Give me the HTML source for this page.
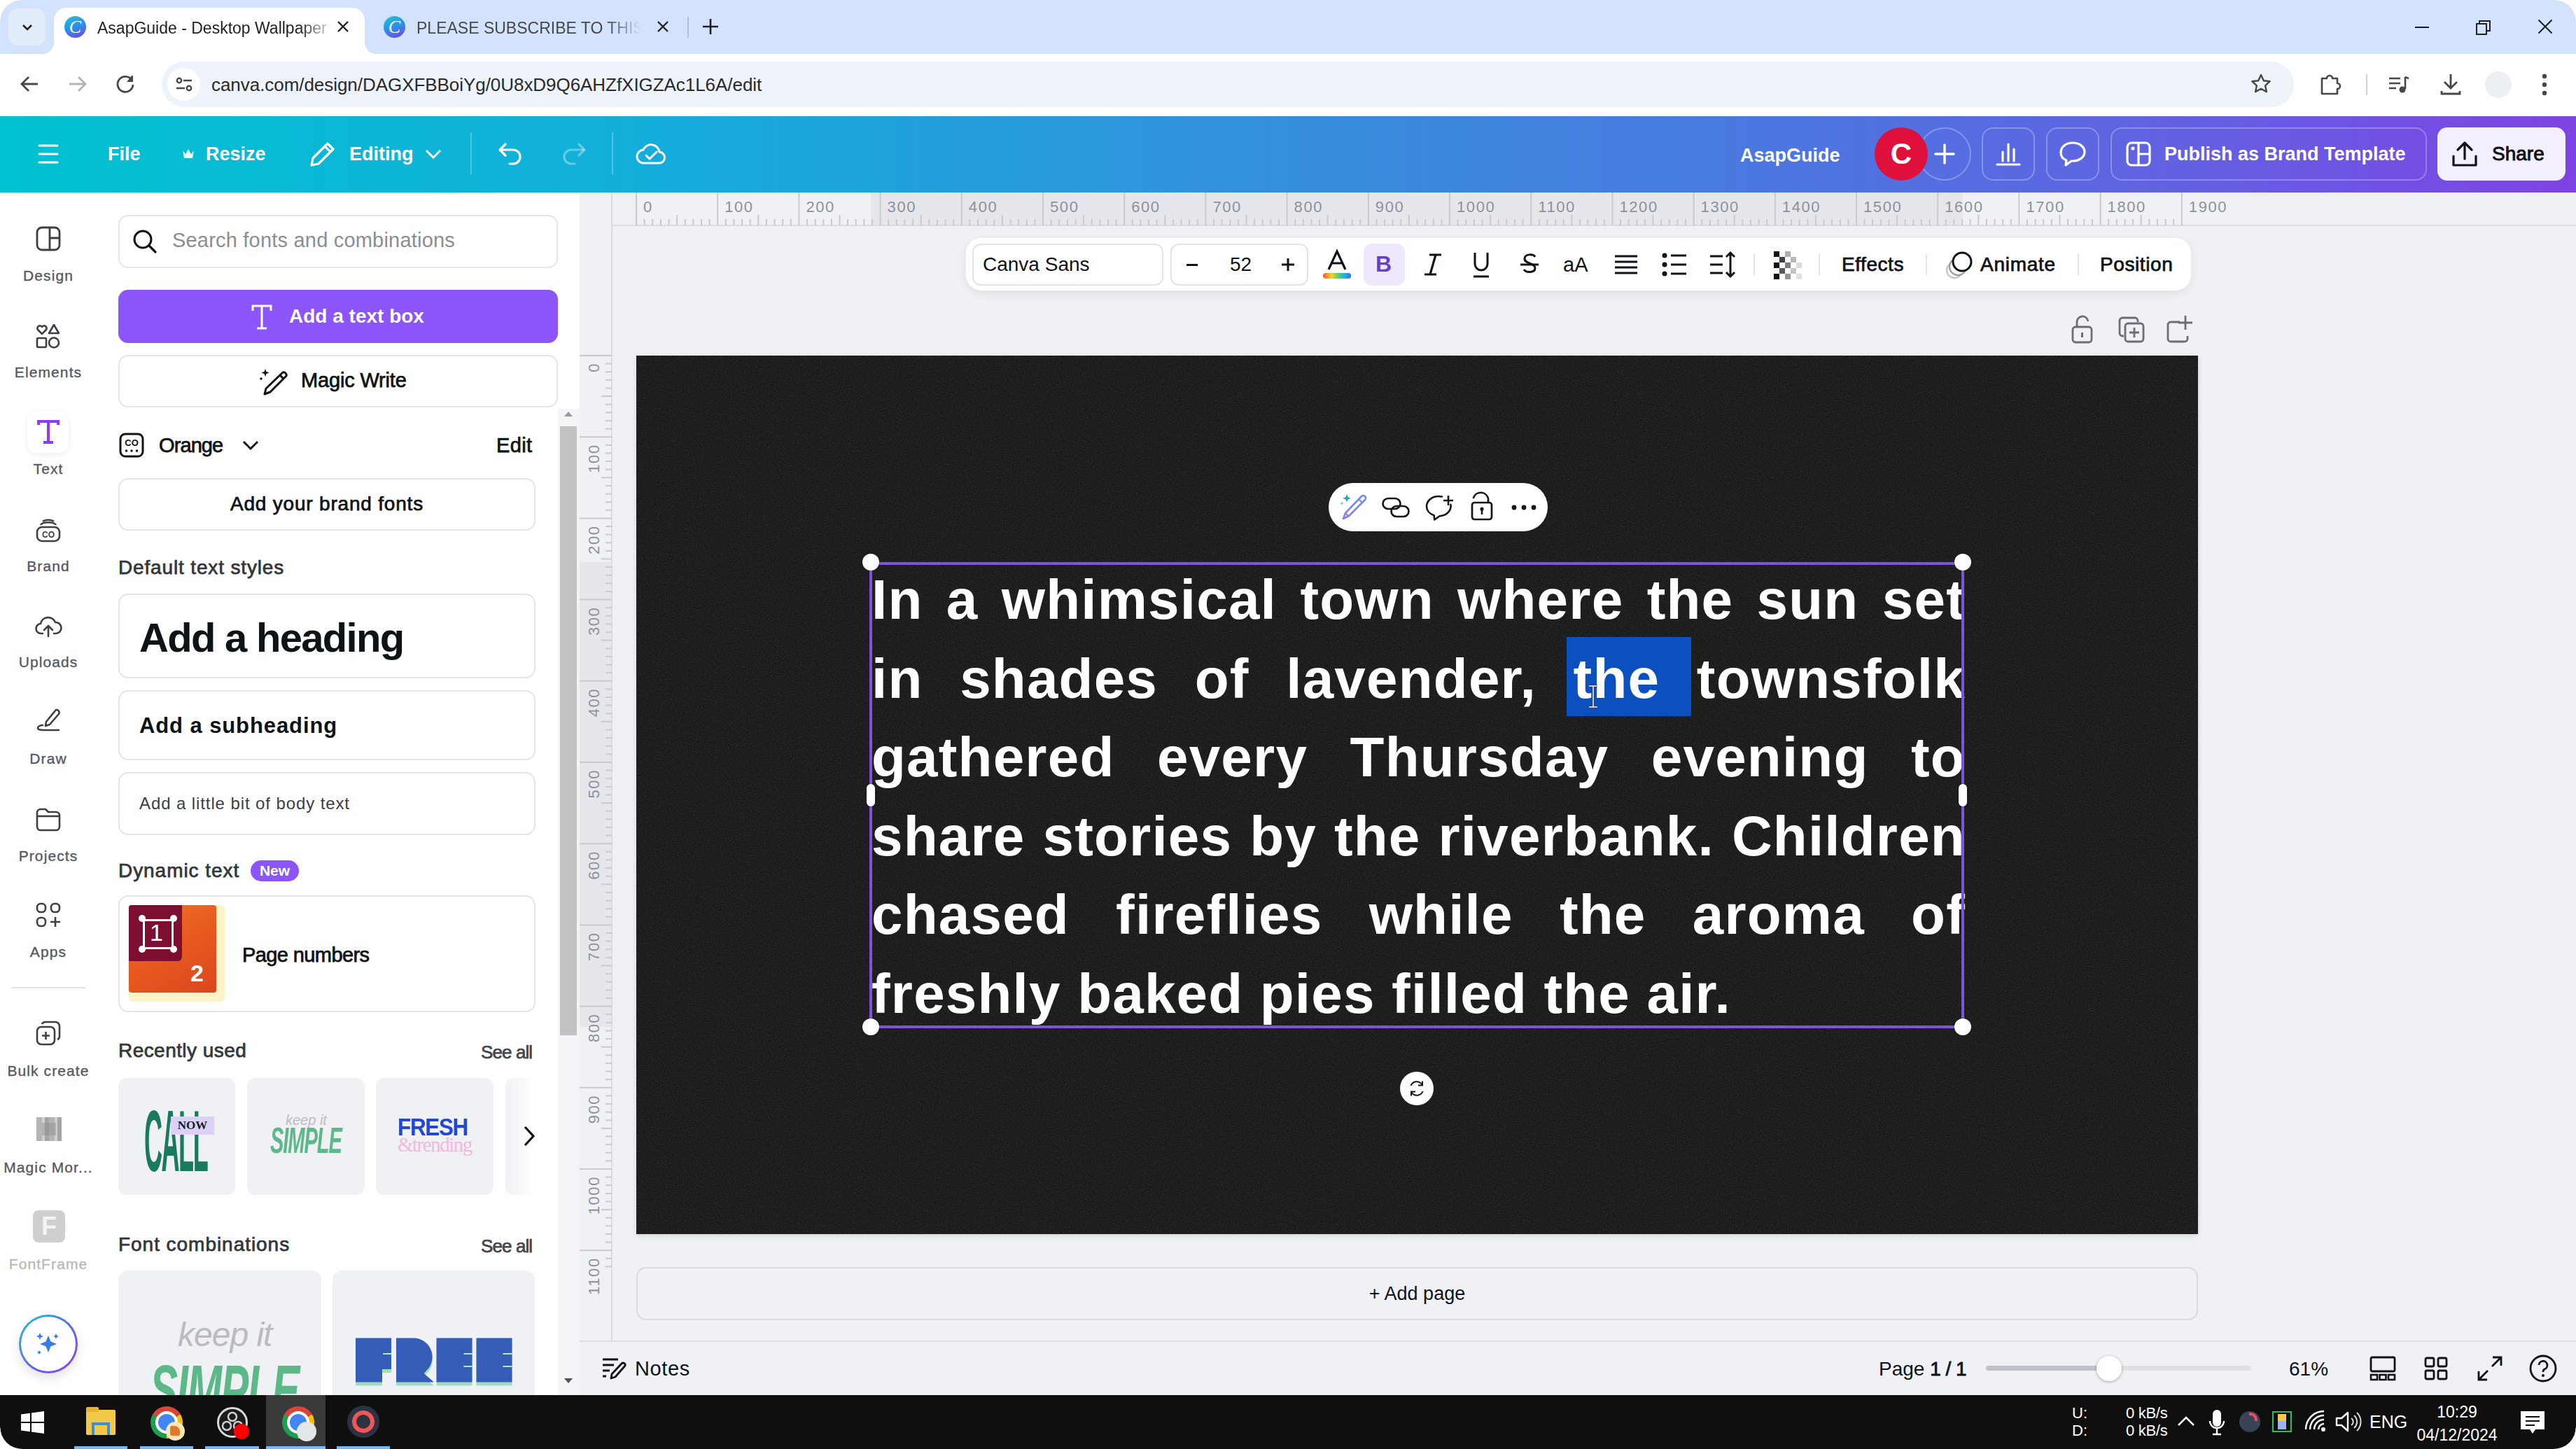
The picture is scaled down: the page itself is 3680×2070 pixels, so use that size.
<!DOCTYPE html>
<html><head><meta charset="utf-8">
<style>
*{margin:0;padding:0;box-sizing:border-box}
html,body{width:3680px;height:2070px;overflow:hidden;background:#fff;font-family:"Liberation Sans",sans-serif}
.a{position:absolute}
.c{display:flex;align-items:center;justify-content:center}
svg{display:block}
.tb{color:#fff;font-size:22px;line-height:25px;white-space:nowrap}
.chrome{width:46px;height:46px;border-radius:50%;background:conic-gradient(from -60deg,#db4437 0 120deg,#f4c20d 120deg 240deg,#1e9e54 240deg 360deg)}
.chrome::after{content:"";position:absolute;left:11px;top:11px;width:24px;height:24px;border-radius:50%;background:#4285f4;box-shadow:0 0 0 4px #fff}
.ctext{color:#fff;font-weight:bold;font-size:80px;line-height:112.5px;letter-spacing:1.2px;white-space:nowrap}
.j{display:flex;justify-content:space-between}
.hd{width:24px;height:24px;border-radius:50%;background:#fff;box-shadow:0 0 2px rgba(0,0,0,.4)}
.pt{white-space:nowrap;line-height:32px}
.md{font-weight:normal!important;-webkit-text-stroke:0.75px currentColor}
.rl{left:0;width:138px;text-align:center;font-size:21px;line-height:28px;color:#555960;white-space:nowrap;letter-spacing:1.1px;-webkit-text-stroke:0.35px #555960}
.hw{color:#fff;font-weight:bold;font-size:27px;line-height:32px;white-space:nowrap}
.fav{width:31px;height:31px;border-radius:50%;background:linear-gradient(160deg,#1fc8d8 0%,#2c8fe6 50%,#7b3fe4 100%);color:#fff;font-family:"Liberation Serif",serif;font-style:italic;font-size:26px;line-height:31px;text-align:center}
</style></head><body>

<!-- ===== Chrome tab strip ===== -->
<div class="a" style="left:0;top:0;width:3680px;height:77px;background:#d3e3fd"></div>
<div class="a" style="left:12px;top:12px;width:53px;height:53px;border-radius:14px;background:#e3ecfb"></div>
<svg class="a" style="left:26px;top:26px" width="26" height="26" viewBox="0 0 26 26"><path d="M7 10l6 6 6-6" fill="none" stroke="#1f1f1f" stroke-width="2.6"/></svg>
<!-- active tab -->
<div class="a" style="left:77px;top:11px;width:444px;height:70px;background:#fff;border-radius:18px 18px 0 0"></div>
<div class="a" style="left:60px;top:60px;width:17px;height:17px;background:radial-gradient(circle at 0 0,#d3e3fd 17px,#fff 17.5px)"></div>
<div class="a" style="left:521px;top:60px;width:17px;height:17px;background:radial-gradient(circle at 100% 0,#d3e3fd 17px,#fff 17.5px)"></div>
<div class="a fav" style="left:92px;top:23px">C</div>
<div class="a" style="left:139px;top:27px;font-size:23px;color:#1f1f1f;white-space:nowrap;width:340px;overflow:hidden;-webkit-mask-image:linear-gradient(90deg,#000 85%,transparent)">AsapGuide - Desktop Wallpaper</div>
<svg class="a" style="left:479px;top:27px" width="22" height="22" viewBox="0 0 22 22"><path d="M4 4l14 14M18 4L4 18" stroke="#1f1f1f" stroke-width="2.4"/></svg>
<!-- second tab -->
<div class="a fav" style="left:548px;top:23px">C</div>
<div class="a" style="left:595px;top:27px;font-size:23px;color:#474747;white-space:nowrap;width:320px;overflow:hidden;-webkit-mask-image:linear-gradient(90deg,#000 85%,transparent)">PLEASE SUBSCRIBE TO THIS CHANNEL</div>
<svg class="a" style="left:936px;top:27px" width="22" height="22" viewBox="0 0 22 22"><path d="M4 4l14 14M18 4L4 18" stroke="#1f1f1f" stroke-width="2.4"/></svg>
<div class="a" style="left:982px;top:24px;width:2px;height:30px;background:#a8c1e8"></div>
<svg class="a" style="left:1001px;top:24px" width="28" height="28" viewBox="0 0 28 28"><path d="M14 3v22M3 14h22" stroke="#1f1f1f" stroke-width="2.6"/></svg>
<!-- window controls -->
<div class="a" style="left:3450px;top:38px;width:20px;height:2px;background:#1a1a1a"></div>
<svg class="a" style="left:3536px;top:27px" width="24" height="24" viewBox="0 0 24 24"><rect x="2" y="7" width="14" height="15" fill="none" stroke="#1a1a1a" stroke-width="1.9"/><path d="M6 7V3h15v14h-5" fill="none" stroke="#1a1a1a" stroke-width="1.9"/></svg>
<svg class="a" style="left:3624px;top:26px" width="24" height="24" viewBox="0 0 24 24"><path d="M2.5 2.5l19 19M21.5 2.5l-19 19" stroke="#1a1a1a" stroke-width="1.9"/></svg>
<div class="a" style="left:0;top:0;width:30px;height:30px;background:radial-gradient(circle at 100% 100%,transparent 29px,#fff 30px)"></div>
<div class="a" style="left:3650px;top:0;width:30px;height:30px;background:radial-gradient(circle at 0 100%,transparent 29px,#fff 30px)"></div>

<!-- ===== Chrome toolbar ===== -->
<div class="a" style="left:0;top:77px;width:3680px;height:89px;background:#fff;border-radius:16px 16px 0 0"></div>
<svg class="a" style="left:26px;top:104px" width="32" height="32" viewBox="0 0 32 32"><path d="M28 16H5M15 6L5 16l10 10" fill="none" stroke="#474747" stroke-width="2.8"/></svg>
<svg class="a" style="left:95px;top:104px" width="32" height="32" viewBox="0 0 32 32"><path d="M4 16h23M17 6l10 10-10 10" fill="none" stroke="#b4b4b4" stroke-width="2.8"/></svg>
<svg class="a" style="left:163px;top:104px" width="32" height="32" viewBox="0 0 32 32"><path d="M25 10A11 11 0 1 0 27 17" fill="none" stroke="#474747" stroke-width="2.8"/><path d="M27 4v9h-9" fill="#474747"/><path d="M19 12l8-1-1-8z" fill="#474747"/></svg>
<div class="a" style="left:231px;top:88px;width:3046px;height:65px;border-radius:33px;background:#eef2f9"></div>
<div class="a" style="left:239px;top:97px;width:47px;height:47px;border-radius:50%;background:#fff"></div>
<svg class="a" style="left:248px;top:106px" width="30" height="30" viewBox="0 0 30 30"><circle cx="8" cy="9" r="3.2" fill="none" stroke="#474747" stroke-width="2.4"/><path d="M14 9h12M4 20h12" stroke="#474747" stroke-width="2.4"/><circle cx="22" cy="20" r="3.2" fill="none" stroke="#474747" stroke-width="2.4"/></svg>
<div class="a" style="left:302px;top:106px;font-size:26px;color:#2a2a2a;white-space:nowrap;letter-spacing:-0.05px">canva.com/design/DAGXFBBoiYg/0U8xD9Q6AHZfXIGZAc1L6A/edit</div>
<svg class="a" style="left:3214px;top:104px" width="32" height="32" viewBox="0 0 32 32"><path d="M16 3l3.8 8.2 8.9 1-6.6 6.1 1.8 8.8L16 22.7l-7.9 4.4 1.8-8.8-6.6-6.1 8.9-1z" fill="none" stroke="#474747" stroke-width="2.4" stroke-linejoin="round"/></svg>
<svg class="a" style="left:3311px;top:102px" width="36" height="36" viewBox="0 0 36 36"><path d="M6 10h7a4 4 0 0 1 8 0h7v7a4 4 0 0 1 0 8v7H6z" fill="none" stroke="#474747" stroke-width="2.6" stroke-linejoin="round"/></svg>
<div class="a" style="left:3380px;top:106px;width:2px;height:30px;background:#d0d5dc"></div>
<svg class="a" style="left:3410px;top:104px" width="34" height="34" viewBox="0 0 34 34"><path d="M3 8h16M3 15h16M3 22h10" stroke="#474747" stroke-width="2.6"/><path d="M26 6v17" stroke="#474747" stroke-width="2.6"/><circle cx="22" cy="24" r="4.5" fill="#474747"/><path d="M26 6l5 2" stroke="#474747" stroke-width="2.6"/></svg>
<svg class="a" style="left:3483px;top:102px" width="36" height="36" viewBox="0 0 36 36"><path d="M18 4v20M9 15l9 9 9-9M5 28v4h26v-4" fill="none" stroke="#474747" stroke-width="2.8"/></svg>
<div class="a" style="left:3550px;top:102px;width:38px;height:38px;border-radius:50%;background:#eceff3"></div>
<svg class="a" style="left:3625px;top:104px" width="20" height="34" viewBox="0 0 20 34"><circle cx="10" cy="5" r="3.2" fill="#474747"/><circle cx="10" cy="17" r="3.2" fill="#474747"/><circle cx="10" cy="29" r="3.2" fill="#474747"/></svg>

<!-- ===== Canva header ===== -->
<div class="a" style="left:0;top:166px;width:3680px;height:109px;background:linear-gradient(90deg,#00c2cf 0%,#14aedb 25%,#3291dc 48%,#4a78e0 68%,#6262e2 84%,#7d43e3 100%)"></div>
<svg class="a" style="left:54px;top:204px" width="30" height="32" viewBox="0 0 30 32"><path d="M2 4h26M2 16h26M2 28h26" stroke="#fff" stroke-width="3.2" stroke-linecap="round"/></svg>
<div class="a hw" style="left:154px;top:204px">File</div>
<svg class="a" style="left:259px;top:211px" width="20" height="18" viewBox="0 0 20 18"><path d="M2 4l4 5 4-7 4 7 4-5-2 11H4z" fill="#fff" opacity=".9"/></svg>
<div class="a hw" style="left:294px;top:204px">Resize</div>
<svg class="a" style="left:441px;top:200px" width="40" height="40" viewBox="0 0 40 40"><path d="M27 5l8 8L14 34l-10 2 2-10z" fill="none" stroke="#fff" stroke-width="3.2" stroke-linejoin="round"/><path d="M23 9l8 8" stroke="#fff" stroke-width="3"/></svg>
<div class="a hw" style="left:499px;top:204px">Editing</div>
<svg class="a" style="left:606px;top:210px" width="26" height="20" viewBox="0 0 26 20"><path d="M3 5l10 10 10-10" fill="none" stroke="#fff" stroke-width="3"/></svg>
<div class="a" style="left:672px;top:189px;width:2px;height:60px;background:rgba(255,255,255,.25)"></div>
<svg class="a" style="left:710px;top:200px" width="40" height="40" viewBox="0 0 40 40"><path d="M12 6L4 14l8 8" fill="none" stroke="#fff" stroke-width="3.2" stroke-linecap="round" stroke-linejoin="round"/><path d="M5 14h18a10 10 0 0 1 0 20h-5" fill="none" stroke="#fff" stroke-width="3.2" stroke-linecap="round"/></svg>
<svg class="a" style="left:799px;top:200px" width="40" height="40" viewBox="0 0 40 40"><g transform="translate(40 0) scale(-1 1)"><path d="M12 6L4 14l8 8" fill="none" stroke="rgba(255,255,255,.35)" stroke-width="3.2" stroke-linecap="round" stroke-linejoin="round"/><path d="M5 14h18a10 10 0 0 1 0 20h-5" fill="none" stroke="rgba(255,255,255,.35)" stroke-width="3.2" stroke-linecap="round"/></g></svg>
<div class="a" style="left:874px;top:189px;width:2px;height:60px;background:rgba(255,255,255,.25)"></div>
<svg class="a" style="left:907px;top:197px" width="46" height="46" viewBox="0 0 46 46"><path d="M13 36h21a8 8 0 0 0 1-16 12 12 0 0 0-23-3A9.5 9.5 0 0 0 13 36z" fill="none" stroke="#fff" stroke-width="3" stroke-linejoin="round"/><path d="M16 25l5 5 10-10" fill="none" stroke="#fff" stroke-width="3" stroke-linecap="round" stroke-linejoin="round"/></svg>

<div class="a hw" style="left:2486px;top:206px">AsapGuide</div>
<div class="a c" style="left:2740px;top:182px;width:76px;height:76px;border-radius:50%;border:2px solid rgba(255,255,255,.28)"></div>
<svg class="a" style="left:2760px;top:202px" width="36" height="36" viewBox="0 0 36 36"><path d="M18 5v26M5 18h26" stroke="#fff" stroke-width="3.4" stroke-linecap="round"/></svg>
<div class="a c" style="left:2678px;top:182px;width:76px;height:76px;border-radius:50%;background:#e0103c;color:#fff;font-weight:bold;font-size:42px">C</div>
<div class="a" style="left:2831px;top:182px;width:76px;height:76px;border-radius:16px;border:2px solid rgba(255,255,255,.28)"></div>
<svg class="a" style="left:2849px;top:200px" width="40" height="40" viewBox="0 0 40 40"><path d="M4 35h32M12 30V17M20 30V6M28 30V13" stroke="#fff" stroke-width="3.2" stroke-linecap="round"/></svg>
<div class="a" style="left:2923px;top:182px;width:76px;height:76px;border-radius:16px;border:2px solid rgba(255,255,255,.28)"></div>
<svg class="a" style="left:2940px;top:199px" width="42" height="42" viewBox="0 0 42 42"><path d="M21 5C11 5 4 11 4 19c0 5 3 9 8 11l-1 7 8-6h2c10 0 17-6 17-13S31 5 21 5z" fill="none" stroke="#fff" stroke-width="3.2" stroke-linejoin="round"/></svg>
<div class="a" style="left:3015px;top:182px;width:452px;height:76px;border-radius:16px;border:2px solid rgba(255,255,255,.28)"></div>
<svg class="a" style="left:3035px;top:200px" width="40" height="40" viewBox="0 0 40 40"><rect x="4" y="4" width="32" height="32" rx="6" fill="none" stroke="#fff" stroke-width="3.2"/><path d="M20 4v32M20 20h16" stroke="#fff" stroke-width="3.2"/><circle cx="12" cy="12" r="2.6" fill="#fff"/></svg>
<div class="a hw" style="left:3092px;top:204px">Publish as Brand Template</div>
<div class="a" style="left:3482px;top:182px;width:183px;height:76px;border-radius:14px;background:#f3effc"></div>
<svg class="a" style="left:3500px;top:199px" width="42" height="42" viewBox="0 0 42 42"><path d="M21 28V6M11 15l10-10 10 10" fill="none" stroke="#0e1318" stroke-width="3.2" stroke-linecap="round" stroke-linejoin="round"/><path d="M5 24v13h32V24" fill="none" stroke="#0e1318" stroke-width="3.2" stroke-linecap="round" stroke-linejoin="round"/></svg>
<div class="a hw" style="left:3560px;top:204px;color:#0e1318;font-weight:normal;font-size:28px;-webkit-text-stroke:0.9px #0e1318">Share</div>

<!-- ===== Left rail ===== -->
<div class="a" style="left:0;top:275px;width:140px;height:1718px;background:#fff"></div>
<div class="a" style="left:39px;top:588px;width:59px;height:59px;border-radius:14px;background:#fff;box-shadow:0 2px 10px rgba(0,0,0,.08)"></div>
<!-- design -->
<svg class="a" style="left:49px;top:321px" width="40" height="40" viewBox="0 0 40 40"><rect x="4" y="4" width="32" height="32" rx="7" fill="none" stroke="#3b3f46" stroke-width="2.8"/><path d="M22 4v32M22 19h14" stroke="#3b3f46" stroke-width="2.8"/></svg>
<div class="a rl" style="top:380px">Design</div>
<!-- elements -->
<svg class="a" style="left:49px;top:460px" width="40" height="40" viewBox="0 0 40 40"><path d="M11 17l-6-6a3.6 3.6 0 0 1 6-4 3.6 3.6 0 0 1 6 4z" fill="none" stroke="#3b3f46" stroke-width="2.6" stroke-linejoin="round"/><path d="M28 4l7 12H21z" fill="none" stroke="#3b3f46" stroke-width="2.6" stroke-linejoin="round"/><rect x="4" y="23" width="13" height="13" rx="1.5" fill="none" stroke="#3b3f46" stroke-width="2.6"/><circle cx="28" cy="29.5" r="7" fill="none" stroke="#3b3f46" stroke-width="2.6"/></svg>
<div class="a rl" style="top:518px">Elements</div>
<!-- text -->
<svg class="a" style="left:49px;top:597px" width="40" height="40" viewBox="0 0 40 40"><path d="M6 10V5h28v5M20 5v30M13 35h14" fill="none" stroke="#8b3dff" stroke-width="4"/></svg>
<div class="a rl" style="top:656px">Text</div>
<!-- brand -->
<svg class="a" style="left:49px;top:736px" width="40" height="40" viewBox="0 0 40 40"><rect x="4" y="17" width="32" height="20" rx="7" fill="none" stroke="#3b3f46" stroke-width="2.6"/><path d="M9 14c3-5 19-5 22 0M12 9c3-3 13-3 16 0" fill="none" stroke="#3b3f46" stroke-width="2.4"/><text x="20" y="32" text-anchor="middle" font-family="Liberation Sans" font-weight="bold" font-size="12" fill="#3b3f46">CO</text></svg>
<div class="a rl" style="top:795px">Brand</div>
<!-- uploads -->
<svg class="a" style="left:49px;top:873px" width="40" height="40" viewBox="0 0 40 40"><path d="M12 32H10a7 7 0 0 1-1-14 11 11 0 0 1 21-2 8 8 0 0 1 1 16h-3" fill="none" stroke="#3b3f46" stroke-width="2.6" stroke-linecap="round"/><path d="M20 36V21M14 27l6-6 6 6" fill="none" stroke="#3b3f46" stroke-width="2.6" stroke-linecap="round" stroke-linejoin="round"/></svg>
<div class="a rl" style="top:932px">Uploads</div>
<!-- draw -->
<svg class="a" style="left:49px;top:1010px" width="40" height="40" viewBox="0 0 40 40"><path d="M31 4a4 4 0 0 1 4 6L22 25l-6 2 1-6z" fill="none" stroke="#3b3f46" stroke-width="2.6" stroke-linejoin="round"/><path d="M12 26c-4 0-7 2-7 4s3 3 8 3h22" fill="none" stroke="#3b3f46" stroke-width="2.6" stroke-linecap="round"/></svg>
<div class="a rl" style="top:1070px">Draw</div>
<!-- projects -->
<svg class="a" style="left:49px;top:1150px" width="40" height="40" viewBox="0 0 40 40"><path d="M4 11a5 5 0 0 1 5-5h7l4 4h11a5 5 0 0 1 5 5v16a5 5 0 0 1-5 5H9a5 5 0 0 1-5-5z" fill="none" stroke="#3b3f46" stroke-width="2.6" stroke-linejoin="round"/><path d="M4 16h32" stroke="#3b3f46" stroke-width="2.6"/></svg>
<div class="a rl" style="top:1209px">Projects</div>
<!-- apps -->
<svg class="a" style="left:49px;top:1287px" width="40" height="40" viewBox="0 0 40 40"><rect x="4" y="4" width="12" height="12" rx="5" fill="none" stroke="#3b3f46" stroke-width="2.6"/><rect x="24" y="4" width="12" height="12" rx="5" fill="none" stroke="#3b3f46" stroke-width="2.6"/><rect x="4" y="24" width="12" height="12" rx="5" fill="none" stroke="#3b3f46" stroke-width="2.6"/><path d="M30 23v14M23 30h14" stroke="#3b3f46" stroke-width="2.6"/></svg>
<div class="a rl" style="top:1346px">Apps</div>
<div class="a" style="left:16px;top:1410px;width:106px;height:2px;background:#e3e4e8"></div>
<!-- bulk create -->
<svg class="a" style="left:49px;top:1456px" width="40" height="40" viewBox="0 0 40 40"><rect x="4" y="11" width="25" height="25" rx="6" fill="none" stroke="#3b3f46" stroke-width="2.6"/><path d="M11 7a5 5 0 0 1 4-3h15a6 6 0 0 1 6 6v15a5 5 0 0 1-3 4" fill="none" stroke="#3b3f46" stroke-width="2.6"/><path d="M16.5 18v11M11 23.5h11" stroke="#3b3f46" stroke-width="2.6"/></svg>
<div class="a rl" style="top:1516px">Bulk create</div>
<!-- magic morph -->
<div class="a" style="left:52px;top:1596px;width:36px;height:34px;background:repeating-linear-gradient(90deg,#b5b5b5 0 8px,#d0d0d0 8px 12px,#a5a5a5 12px 18px)"></div>
<div class="a" style="left:60px;top:1604px;width:20px;height:18px;background:#8e8e8e;opacity:.45"></div>
<div class="a rl" style="top:1654px">Magic Mor...</div>
<!-- fontframe -->
<div class="a c" style="left:47px;top:1729px;width:46px;height:46px;border-radius:8px;background:#cfcfcf;color:#f4f4f4;font-weight:bold;font-size:36px">F</div>
<div class="a rl" style="top:1792px;color:#b8b8b8;-webkit-text-stroke-color:#b8b8b8">FontFrame</div>
<!-- magic button -->
<div class="a" style="left:27px;top:1878px;width:84px;height:84px;border-radius:50%;background:linear-gradient(135deg,#1ec8d8,#5b6de0,#8b3dff);box-shadow:0 6px 16px rgba(0,0,0,.12)"></div>
<div class="a" style="left:30px;top:1881px;width:78px;height:78px;border-radius:50%;background:#fff"></div>
<svg class="a" style="left:47px;top:1898px" width="44" height="44" viewBox="0 0 44 44"><path d="M22 10l3.5 8.5L34 22l-8.5 3.5L22 34l-3.5-8.5L10 22l8.5-3.5z" fill="#3b79e3"/><path d="M10 6l1.5 3.5L15 11l-3.5 1.5L10 16l-1.5-3.5L5 11l3.5-1.5z" fill="#3b79e3"/><path d="M33 7l1.2 2.8L37 11l-2.8 1.2L33 15l-1.2-2.8L29 11l2.8-1.2z" fill="#3b79e3"/><circle cx="9" cy="34" r="2" fill="#3b79e3"/></svg>
<!-- ===== Panel ===== -->
<div class="a" style="left:140px;top:275px;width:688px;height:1718px;background:#fff"></div>
<div class="a" style="left:169px;top:307px;width:628px;height:76px;border:2px solid #e5e6ea;border-radius:14px"></div>
<svg class="a" style="left:187px;top:325px" width="40" height="40" viewBox="0 0 40 40"><circle cx="17" cy="17" r="12" fill="none" stroke="#0e1318" stroke-width="3"/><path d="M26 26l9 9" stroke="#0e1318" stroke-width="3.2" stroke-linecap="round"/></svg>
<div class="a pt" style="left:246px;top:327px;font-size:29px;color:#8a8d93;letter-spacing:0.2px">Search fonts and combinations</div>
<div class="a" style="left:169px;top:414px;width:628px;height:76px;border-radius:14px;background:#8b55f9"></div>
<svg class="a" style="left:358px;top:434px" width="32" height="38" viewBox="0 0 32 38"><path d="M3 10V3h26v7M16 3v32M9 35h14" fill="none" stroke="#fff" stroke-width="3"/></svg>
<div class="a pt" style="left:413px;top:436px;font-size:28px;font-weight:bold;color:#fff">Add a text box</div>
<div class="a" style="left:169px;top:507px;width:628px;height:75px;border:2px solid #e5e6ea;border-radius:14px"></div>
<svg class="a" style="left:368px;top:524px" width="46" height="46" viewBox="0 0 46 46"><path d="M36 8a4 4 0 0 1 5 5L18 36l-8 3 2-8z" fill="none" stroke="#0e1318" stroke-width="3" stroke-linejoin="round"/><path d="M32 12l5 5" stroke="#0e1318" stroke-width="3"/><path d="M11 3l1.5 4 4 1.5-4 1.5L11 14l-1.5-4-4-1.5 4-1.5z" fill="#0e1318"/><circle cx="5" cy="17" r="1.8" fill="#0e1318"/></svg>
<div class="a pt md" style="left:430px;top:527px;font-size:29px;font-weight:bold;color:#0e1318;letter-spacing:-0.17px">Magic Write</div>
<svg class="a" style="left:169px;top:617px" width="38" height="38" viewBox="0 0 38 38"><rect x="3" y="3" width="32" height="32" rx="7" fill="none" stroke="#0e1318" stroke-width="3"/><text x="19" y="20" text-anchor="middle" font-family="Liberation Sans" font-weight="bold" font-size="13" fill="#0e1318">CO</text><path d="M10 27h3M17.5 27h3M25 27h3" stroke="#0e1318" stroke-width="3"/></svg>
<div class="a pt md" style="left:227px;top:620px;font-size:29px;font-weight:bold;color:#0e1318;letter-spacing:-0.9px">Orange</div>
<svg class="a" style="left:344px;top:624px" width="28" height="24" viewBox="0 0 28 24"><path d="M4 7l10 10 10-10" fill="none" stroke="#0e1318" stroke-width="3"/></svg>
<div class="a pt md" style="left:709px;top:620px;font-size:29px;font-weight:bold;color:#0e1318;letter-spacing:0.4px">Edit</div>
<div class="a" style="left:169px;top:683px;width:596px;height:75px;border:2px solid #e5e6ea;border-radius:14px"></div>
<div class="a pt md" style="left:169px;top:704px;width:596px;text-align:center;font-size:28px;font-weight:bold;color:#0e1318;letter-spacing:0.8px">Add your brand fonts</div>
<div class="a pt md" style="left:169px;top:795px;font-size:28px;font-weight:bold;color:#33363c;letter-spacing:0.85px">Default text styles</div>
<div class="a" style="left:169px;top:848px;width:596px;height:121px;border:2px solid #e5e6ea;border-radius:14px"></div>
<div class="a pt" style="left:199px;top:895px;font-size:58px;font-weight:bold;color:#0e1318;letter-spacing:-1.7px">Add a heading</div>
<div class="a" style="left:169px;top:986px;width:596px;height:100px;border:2px solid #e5e6ea;border-radius:14px"></div>
<div class="a pt" style="left:199px;top:1021px;font-size:31px;font-weight:bold;color:#0e1318;letter-spacing:0.9px">Add a subheading</div>
<div class="a" style="left:169px;top:1103px;width:596px;height:90px;border:2px solid #e5e6ea;border-radius:14px"></div>
<div class="a pt" style="left:199px;top:1132px;font-size:24px;color:#3a3e45;letter-spacing:0.9px">Add a little bit of body text</div>
<div class="a pt md" style="left:169px;top:1228px;font-size:28px;font-weight:bold;color:#33363c;letter-spacing:0.94px">Dynamic text</div>
<div class="a c" style="left:358px;top:1229px;width:69px;height:30px;border-radius:15px;background:#8b55f9;color:#fff;font-weight:bold;font-size:21px">New</div>
<div class="a" style="left:169px;top:1279px;width:596px;height:167px;border:2px solid #e5e6ea;border-radius:14px"></div>
<div class="a" style="left:184px;top:1293px;width:137px;height:138px;border-radius:6px;background:#fdf3c6"></div>
<div class="a" style="left:184px;top:1293px;width:125px;height:125px;border-radius:4px;background:linear-gradient(150deg,#f0742a 0%,#e8591f 50%,#d9481f 100%)"></div>
<div class="a" style="left:184px;top:1293px;width:76px;height:80px;border-radius:4px 0 6px 0;background:#7c0f2f"></div>
<div class="a" style="left:204px;top:1313px;width:44px;height:43px;border:3px solid #fff"></div>
<div class="a" style="left:198px;top:1307px;width:10px;height:10px;border-radius:50%;background:#fff"></div>
<div class="a" style="left:243px;top:1307px;width:10px;height:10px;border-radius:50%;background:#fff"></div>
<div class="a" style="left:198px;top:1351px;width:10px;height:10px;border-radius:50%;background:#fff"></div>
<div class="a" style="left:243px;top:1351px;width:10px;height:10px;border-radius:50%;background:#fff"></div>
<div class="a pt" style="left:214px;top:1316px;font-size:34px;color:#fff">1</div>
<div class="a pt" style="left:272px;top:1374px;font-size:34px;font-weight:bold;color:#fff">2</div>
<div class="a pt md" style="left:346px;top:1348px;font-size:29px;font-weight:bold;color:#0e1318;letter-spacing:-0.6px">Page numbers</div>
<div class="a pt md" style="left:169px;top:1485px;font-size:28px;font-weight:bold;color:#33363c;letter-spacing:0.44px">Recently used</div>
<div class="a pt md" style="left:687px;top:1487px;font-size:26px;font-weight:bold;color:#44474d;letter-spacing:-0.9px">See all</div>
<div class="a" style="left:169px;top:1540px;width:167px;height:167px;border-radius:12px;background:#f0f1f4"></div>
<div class="a pt" style="left:206px;top:1558px;font-size:100px;line-height:115px;font-weight:bold;color:#1a7a5c;transform:scaleX(.36) scaleY(1.25);transform-origin:0 0;letter-spacing:-4px">CALL</div>
<div class="a c" style="left:244px;top:1595px;width:62px;height:26px;background:#ddd1f7;color:#1b1b1b;font-family:'Liberation Serif',serif;font-weight:bold;font-size:17px">NOW</div>
<div class="a" style="left:353px;top:1540px;width:168px;height:167px;border-radius:12px;background:#f0f1f4"></div>
<div class="a pt" style="left:408px;top:1584px;font-size:20px;font-style:italic;color:#b9bbbf">keep it</div>
<div class="a pt" style="left:386px;top:1603px;font-size:52px;line-height:52px;font-weight:bold;font-style:italic;color:#5cb889;transform:scaleX(.56);transform-origin:0 0;letter-spacing:-2px">SIMPLE</div>
<div class="a" style="left:537px;top:1540px;width:168px;height:167px;border-radius:12px;background:#f0f1f4"></div>
<div class="a pt" style="left:568px;top:1592px;font-size:35px;line-height:35px;font-weight:bold;color:#2348d6;letter-spacing:-1.5px;transform:scaleX(.9);transform-origin:0 0">FRESH</div>
<div class="a pt" style="left:568px;top:1620px;font-size:29px;line-height:30px;font-family:'Liberation Serif',serif;color:#f2b8dc;letter-spacing:-1.5px">&amp;trending</div>
<div class="a" style="left:722px;top:1540px;width:42px;height:167px;border-radius:12px 0 0 12px;background:linear-gradient(90deg,#f0f1f4,#fff)"></div>
<svg class="a" style="left:743px;top:1605px" width="26" height="36" viewBox="0 0 26 36"><path d="M7 5l12 13L7 31" fill="none" stroke="#0e1318" stroke-width="3.2"/></svg>
<div class="a pt md" style="left:169px;top:1762px;font-size:28px;font-weight:bold;color:#33363c;letter-spacing:0.96px">Font combinations</div>
<div class="a pt md" style="left:687px;top:1764px;font-size:26px;font-weight:bold;color:#44474d;letter-spacing:-0.9px">See all</div>
<div class="a" style="left:169px;top:1815px;width:290px;height:190px;border-radius:14px;background:#f0f1f4;overflow:hidden">
  <div class="a pt" style="left:85px;top:76px;font-size:48px;font-style:italic;color:#b9bbbf;letter-spacing:-1px">keep it</div>
  <div class="a pt" style="left:45px;top:120px;font-size:100px;line-height:100px;font-weight:bold;font-style:italic;color:#5cb889;transform:scaleX(.6);transform-origin:0 0;letter-spacing:-3px">SIMPLE</div>
</div>
<div class="a" style="left:475px;top:1815px;width:289px;height:190px;border-radius:14px;background:#f0f1f4;overflow:hidden">
  <svg class="a" style="left:0;top:0" width="289" height="190" viewBox="0 0 289 190"><g fill="#a3dcbc" transform="translate(0 5)"><path d="M33 96.5H84V141H71V159.5H33z"/><path d="M91 96.5H116A27 27 0 0 1 137 140L130.5 147L145 159.5H91z"/><rect x="148.5" y="96.5" width="51" height="63"/><rect x="205.5" y="96.5" width="51" height="63"/></g><g fill="#355db8"><path d="M33 96.5H84V141H71V159.5H33z"/><path d="M91 96.5H116A27 27 0 0 1 137 140L130.5 147L145 159.5H91z"/><rect x="148.5" y="96.5" width="51" height="63"/><rect x="205.5" y="96.5" width="51" height="63"/></g><g stroke="#b9e6cf" stroke-width="2.2"><path d="M72 119h12M187.5 119h12M187.5 137h12M243.5 119h13M243.5 137h13"/></g></svg>
</div>
<!-- panel scrollbar -->
<div class="a" style="left:797px;top:584px;width:31px;height:1409px;background:#f4f4f6"></div>
<svg class="a" style="left:803px;top:584px" width="18" height="14" viewBox="0 0 18 14"><path d="M3 11l6-7 6 7z" fill="#9a9a9a"/></svg>
<div class="a" style="left:800px;top:609px;width:24px;height:870px;background:#c1c1c1"></div>
<svg class="a" style="left:803px;top:1966px" width="18" height="14" viewBox="0 0 18 14"><path d="M3 3l6 7 6-7z" fill="#505050"/></svg>

<!-- ===== Canvas area ===== -->
<div class="a" style="left:828px;top:275px;width:2852px;height:1718px;background:#f0f1f5"></div>
<div class="a" style="left:828px;top:275px;width:2852px;height:48px;background:#f0f1f5;border-bottom:2px solid #dcdde2"></div>
<div class="a" style="left:1244px;top:275px;width:1560px;height:46px;background:#e6e7ec"></div>
<div class="a" style="left:828px;top:275px;width:47px;height:1641px;background:#f0f1f5;border-right:2px solid #dcdde2"></div>
<div class="a" style="left:828px;top:803px;width:45px;height:664px;background:#e6e7ec"></div>
<svg class="a" style="left:0;top:0" width="3680" height="2070" viewBox="0 0 3680 2070"><line x1="909.0" y1="275" x2="909.0" y2="322" stroke="#c9cacf" stroke-width="2"/><text x="919.0" y="303" font-family="Liberation Sans" font-size="22" letter-spacing="1.6" fill="#8e9197">0</text><line x1="920.6" y1="313" x2="920.6" y2="322" stroke="#c9cacf" stroke-width="2"/><line x1="932.2" y1="313" x2="932.2" y2="322" stroke="#c9cacf" stroke-width="2"/><line x1="943.9" y1="313" x2="943.9" y2="322" stroke="#c9cacf" stroke-width="2"/><line x1="955.5" y1="313" x2="955.5" y2="322" stroke="#c9cacf" stroke-width="2"/><line x1="967.1" y1="307" x2="967.1" y2="322" stroke="#c9cacf" stroke-width="2"/><line x1="978.7" y1="313" x2="978.7" y2="322" stroke="#c9cacf" stroke-width="2"/><line x1="990.3" y1="313" x2="990.3" y2="322" stroke="#c9cacf" stroke-width="2"/><line x1="1002.0" y1="313" x2="1002.0" y2="322" stroke="#c9cacf" stroke-width="2"/><line x1="1013.6" y1="313" x2="1013.6" y2="322" stroke="#c9cacf" stroke-width="2"/><line x1="1025.2" y1="275" x2="1025.2" y2="322" stroke="#c9cacf" stroke-width="2"/><text x="1035.2" y="303" font-family="Liberation Sans" font-size="22" letter-spacing="1.6" fill="#8e9197">100</text><line x1="1036.8" y1="313" x2="1036.8" y2="322" stroke="#c9cacf" stroke-width="2"/><line x1="1048.4" y1="313" x2="1048.4" y2="322" stroke="#c9cacf" stroke-width="2"/><line x1="1060.1" y1="313" x2="1060.1" y2="322" stroke="#c9cacf" stroke-width="2"/><line x1="1071.7" y1="313" x2="1071.7" y2="322" stroke="#c9cacf" stroke-width="2"/><line x1="1083.3" y1="307" x2="1083.3" y2="322" stroke="#c9cacf" stroke-width="2"/><line x1="1094.9" y1="313" x2="1094.9" y2="322" stroke="#c9cacf" stroke-width="2"/><line x1="1106.5" y1="313" x2="1106.5" y2="322" stroke="#c9cacf" stroke-width="2"/><line x1="1118.2" y1="313" x2="1118.2" y2="322" stroke="#c9cacf" stroke-width="2"/><line x1="1129.8" y1="313" x2="1129.8" y2="322" stroke="#c9cacf" stroke-width="2"/><line x1="1141.4" y1="275" x2="1141.4" y2="322" stroke="#c9cacf" stroke-width="2"/><text x="1151.4" y="303" font-family="Liberation Sans" font-size="22" letter-spacing="1.6" fill="#8e9197">200</text><line x1="1153.0" y1="313" x2="1153.0" y2="322" stroke="#c9cacf" stroke-width="2"/><line x1="1164.6" y1="313" x2="1164.6" y2="322" stroke="#c9cacf" stroke-width="2"/><line x1="1176.3" y1="313" x2="1176.3" y2="322" stroke="#c9cacf" stroke-width="2"/><line x1="1187.9" y1="313" x2="1187.9" y2="322" stroke="#c9cacf" stroke-width="2"/><line x1="1199.5" y1="307" x2="1199.5" y2="322" stroke="#c9cacf" stroke-width="2"/><line x1="1211.1" y1="313" x2="1211.1" y2="322" stroke="#c9cacf" stroke-width="2"/><line x1="1222.7" y1="313" x2="1222.7" y2="322" stroke="#c9cacf" stroke-width="2"/><line x1="1234.4" y1="313" x2="1234.4" y2="322" stroke="#c9cacf" stroke-width="2"/><line x1="1246.0" y1="313" x2="1246.0" y2="322" stroke="#c9cacf" stroke-width="2"/><line x1="1257.6" y1="275" x2="1257.6" y2="322" stroke="#c9cacf" stroke-width="2"/><text x="1267.6" y="303" font-family="Liberation Sans" font-size="22" letter-spacing="1.6" fill="#8e9197">300</text><line x1="1269.2" y1="313" x2="1269.2" y2="322" stroke="#c9cacf" stroke-width="2"/><line x1="1280.8" y1="313" x2="1280.8" y2="322" stroke="#c9cacf" stroke-width="2"/><line x1="1292.5" y1="313" x2="1292.5" y2="322" stroke="#c9cacf" stroke-width="2"/><line x1="1304.1" y1="313" x2="1304.1" y2="322" stroke="#c9cacf" stroke-width="2"/><line x1="1315.7" y1="307" x2="1315.7" y2="322" stroke="#c9cacf" stroke-width="2"/><line x1="1327.3" y1="313" x2="1327.3" y2="322" stroke="#c9cacf" stroke-width="2"/><line x1="1338.9" y1="313" x2="1338.9" y2="322" stroke="#c9cacf" stroke-width="2"/><line x1="1350.6" y1="313" x2="1350.6" y2="322" stroke="#c9cacf" stroke-width="2"/><line x1="1362.2" y1="313" x2="1362.2" y2="322" stroke="#c9cacf" stroke-width="2"/><line x1="1373.8" y1="275" x2="1373.8" y2="322" stroke="#c9cacf" stroke-width="2"/><text x="1383.8" y="303" font-family="Liberation Sans" font-size="22" letter-spacing="1.6" fill="#8e9197">400</text><line x1="1385.4" y1="313" x2="1385.4" y2="322" stroke="#c9cacf" stroke-width="2"/><line x1="1397.0" y1="313" x2="1397.0" y2="322" stroke="#c9cacf" stroke-width="2"/><line x1="1408.7" y1="313" x2="1408.7" y2="322" stroke="#c9cacf" stroke-width="2"/><line x1="1420.3" y1="313" x2="1420.3" y2="322" stroke="#c9cacf" stroke-width="2"/><line x1="1431.9" y1="307" x2="1431.9" y2="322" stroke="#c9cacf" stroke-width="2"/><line x1="1443.5" y1="313" x2="1443.5" y2="322" stroke="#c9cacf" stroke-width="2"/><line x1="1455.1" y1="313" x2="1455.1" y2="322" stroke="#c9cacf" stroke-width="2"/><line x1="1466.8" y1="313" x2="1466.8" y2="322" stroke="#c9cacf" stroke-width="2"/><line x1="1478.4" y1="313" x2="1478.4" y2="322" stroke="#c9cacf" stroke-width="2"/><line x1="1490.0" y1="275" x2="1490.0" y2="322" stroke="#c9cacf" stroke-width="2"/><text x="1500.0" y="303" font-family="Liberation Sans" font-size="22" letter-spacing="1.6" fill="#8e9197">500</text><line x1="1501.6" y1="313" x2="1501.6" y2="322" stroke="#c9cacf" stroke-width="2"/><line x1="1513.2" y1="313" x2="1513.2" y2="322" stroke="#c9cacf" stroke-width="2"/><line x1="1524.9" y1="313" x2="1524.9" y2="322" stroke="#c9cacf" stroke-width="2"/><line x1="1536.5" y1="313" x2="1536.5" y2="322" stroke="#c9cacf" stroke-width="2"/><line x1="1548.1" y1="307" x2="1548.1" y2="322" stroke="#c9cacf" stroke-width="2"/><line x1="1559.7" y1="313" x2="1559.7" y2="322" stroke="#c9cacf" stroke-width="2"/><line x1="1571.3" y1="313" x2="1571.3" y2="322" stroke="#c9cacf" stroke-width="2"/><line x1="1583.0" y1="313" x2="1583.0" y2="322" stroke="#c9cacf" stroke-width="2"/><line x1="1594.6" y1="313" x2="1594.6" y2="322" stroke="#c9cacf" stroke-width="2"/><line x1="1606.2" y1="275" x2="1606.2" y2="322" stroke="#c9cacf" stroke-width="2"/><text x="1616.2" y="303" font-family="Liberation Sans" font-size="22" letter-spacing="1.6" fill="#8e9197">600</text><line x1="1617.8" y1="313" x2="1617.8" y2="322" stroke="#c9cacf" stroke-width="2"/><line x1="1629.4" y1="313" x2="1629.4" y2="322" stroke="#c9cacf" stroke-width="2"/><line x1="1641.1" y1="313" x2="1641.1" y2="322" stroke="#c9cacf" stroke-width="2"/><line x1="1652.7" y1="313" x2="1652.7" y2="322" stroke="#c9cacf" stroke-width="2"/><line x1="1664.3" y1="307" x2="1664.3" y2="322" stroke="#c9cacf" stroke-width="2"/><line x1="1675.9" y1="313" x2="1675.9" y2="322" stroke="#c9cacf" stroke-width="2"/><line x1="1687.5" y1="313" x2="1687.5" y2="322" stroke="#c9cacf" stroke-width="2"/><line x1="1699.2" y1="313" x2="1699.2" y2="322" stroke="#c9cacf" stroke-width="2"/><line x1="1710.8" y1="313" x2="1710.8" y2="322" stroke="#c9cacf" stroke-width="2"/><line x1="1722.4" y1="275" x2="1722.4" y2="322" stroke="#c9cacf" stroke-width="2"/><text x="1732.4" y="303" font-family="Liberation Sans" font-size="22" letter-spacing="1.6" fill="#8e9197">700</text><line x1="1734.0" y1="313" x2="1734.0" y2="322" stroke="#c9cacf" stroke-width="2"/><line x1="1745.6" y1="313" x2="1745.6" y2="322" stroke="#c9cacf" stroke-width="2"/><line x1="1757.3" y1="313" x2="1757.3" y2="322" stroke="#c9cacf" stroke-width="2"/><line x1="1768.9" y1="313" x2="1768.9" y2="322" stroke="#c9cacf" stroke-width="2"/><line x1="1780.5" y1="307" x2="1780.5" y2="322" stroke="#c9cacf" stroke-width="2"/><line x1="1792.1" y1="313" x2="1792.1" y2="322" stroke="#c9cacf" stroke-width="2"/><line x1="1803.7" y1="313" x2="1803.7" y2="322" stroke="#c9cacf" stroke-width="2"/><line x1="1815.4" y1="313" x2="1815.4" y2="322" stroke="#c9cacf" stroke-width="2"/><line x1="1827.0" y1="313" x2="1827.0" y2="322" stroke="#c9cacf" stroke-width="2"/><line x1="1838.6" y1="275" x2="1838.6" y2="322" stroke="#c9cacf" stroke-width="2"/><text x="1848.6" y="303" font-family="Liberation Sans" font-size="22" letter-spacing="1.6" fill="#8e9197">800</text><line x1="1850.2" y1="313" x2="1850.2" y2="322" stroke="#c9cacf" stroke-width="2"/><line x1="1861.8" y1="313" x2="1861.8" y2="322" stroke="#c9cacf" stroke-width="2"/><line x1="1873.5" y1="313" x2="1873.5" y2="322" stroke="#c9cacf" stroke-width="2"/><line x1="1885.1" y1="313" x2="1885.1" y2="322" stroke="#c9cacf" stroke-width="2"/><line x1="1896.7" y1="307" x2="1896.7" y2="322" stroke="#c9cacf" stroke-width="2"/><line x1="1908.3" y1="313" x2="1908.3" y2="322" stroke="#c9cacf" stroke-width="2"/><line x1="1919.9" y1="313" x2="1919.9" y2="322" stroke="#c9cacf" stroke-width="2"/><line x1="1931.6" y1="313" x2="1931.6" y2="322" stroke="#c9cacf" stroke-width="2"/><line x1="1943.2" y1="313" x2="1943.2" y2="322" stroke="#c9cacf" stroke-width="2"/><line x1="1954.8" y1="275" x2="1954.8" y2="322" stroke="#c9cacf" stroke-width="2"/><text x="1964.8" y="303" font-family="Liberation Sans" font-size="22" letter-spacing="1.6" fill="#8e9197">900</text><line x1="1966.4" y1="313" x2="1966.4" y2="322" stroke="#c9cacf" stroke-width="2"/><line x1="1978.0" y1="313" x2="1978.0" y2="322" stroke="#c9cacf" stroke-width="2"/><line x1="1989.7" y1="313" x2="1989.7" y2="322" stroke="#c9cacf" stroke-width="2"/><line x1="2001.3" y1="313" x2="2001.3" y2="322" stroke="#c9cacf" stroke-width="2"/><line x1="2012.9" y1="307" x2="2012.9" y2="322" stroke="#c9cacf" stroke-width="2"/><line x1="2024.5" y1="313" x2="2024.5" y2="322" stroke="#c9cacf" stroke-width="2"/><line x1="2036.1" y1="313" x2="2036.1" y2="322" stroke="#c9cacf" stroke-width="2"/><line x1="2047.8" y1="313" x2="2047.8" y2="322" stroke="#c9cacf" stroke-width="2"/><line x1="2059.4" y1="313" x2="2059.4" y2="322" stroke="#c9cacf" stroke-width="2"/><line x1="2071.0" y1="275" x2="2071.0" y2="322" stroke="#c9cacf" stroke-width="2"/><text x="2081.0" y="303" font-family="Liberation Sans" font-size="22" letter-spacing="1.6" fill="#8e9197">1000</text><line x1="2082.6" y1="313" x2="2082.6" y2="322" stroke="#c9cacf" stroke-width="2"/><line x1="2094.2" y1="313" x2="2094.2" y2="322" stroke="#c9cacf" stroke-width="2"/><line x1="2105.9" y1="313" x2="2105.9" y2="322" stroke="#c9cacf" stroke-width="2"/><line x1="2117.5" y1="313" x2="2117.5" y2="322" stroke="#c9cacf" stroke-width="2"/><line x1="2129.1" y1="307" x2="2129.1" y2="322" stroke="#c9cacf" stroke-width="2"/><line x1="2140.7" y1="313" x2="2140.7" y2="322" stroke="#c9cacf" stroke-width="2"/><line x1="2152.3" y1="313" x2="2152.3" y2="322" stroke="#c9cacf" stroke-width="2"/><line x1="2164.0" y1="313" x2="2164.0" y2="322" stroke="#c9cacf" stroke-width="2"/><line x1="2175.6" y1="313" x2="2175.6" y2="322" stroke="#c9cacf" stroke-width="2"/><line x1="2187.2" y1="275" x2="2187.2" y2="322" stroke="#c9cacf" stroke-width="2"/><text x="2197.2" y="303" font-family="Liberation Sans" font-size="22" letter-spacing="1.6" fill="#8e9197">1100</text><line x1="2198.8" y1="313" x2="2198.8" y2="322" stroke="#c9cacf" stroke-width="2"/><line x1="2210.4" y1="313" x2="2210.4" y2="322" stroke="#c9cacf" stroke-width="2"/><line x1="2222.1" y1="313" x2="2222.1" y2="322" stroke="#c9cacf" stroke-width="2"/><line x1="2233.7" y1="313" x2="2233.7" y2="322" stroke="#c9cacf" stroke-width="2"/><line x1="2245.3" y1="307" x2="2245.3" y2="322" stroke="#c9cacf" stroke-width="2"/><line x1="2256.9" y1="313" x2="2256.9" y2="322" stroke="#c9cacf" stroke-width="2"/><line x1="2268.5" y1="313" x2="2268.5" y2="322" stroke="#c9cacf" stroke-width="2"/><line x1="2280.2" y1="313" x2="2280.2" y2="322" stroke="#c9cacf" stroke-width="2"/><line x1="2291.8" y1="313" x2="2291.8" y2="322" stroke="#c9cacf" stroke-width="2"/><line x1="2303.4" y1="275" x2="2303.4" y2="322" stroke="#c9cacf" stroke-width="2"/><text x="2313.4" y="303" font-family="Liberation Sans" font-size="22" letter-spacing="1.6" fill="#8e9197">1200</text><line x1="2315.0" y1="313" x2="2315.0" y2="322" stroke="#c9cacf" stroke-width="2"/><line x1="2326.6" y1="313" x2="2326.6" y2="322" stroke="#c9cacf" stroke-width="2"/><line x1="2338.3" y1="313" x2="2338.3" y2="322" stroke="#c9cacf" stroke-width="2"/><line x1="2349.9" y1="313" x2="2349.9" y2="322" stroke="#c9cacf" stroke-width="2"/><line x1="2361.5" y1="307" x2="2361.5" y2="322" stroke="#c9cacf" stroke-width="2"/><line x1="2373.1" y1="313" x2="2373.1" y2="322" stroke="#c9cacf" stroke-width="2"/><line x1="2384.7" y1="313" x2="2384.7" y2="322" stroke="#c9cacf" stroke-width="2"/><line x1="2396.4" y1="313" x2="2396.4" y2="322" stroke="#c9cacf" stroke-width="2"/><line x1="2408.0" y1="313" x2="2408.0" y2="322" stroke="#c9cacf" stroke-width="2"/><line x1="2419.6" y1="275" x2="2419.6" y2="322" stroke="#c9cacf" stroke-width="2"/><text x="2429.6" y="303" font-family="Liberation Sans" font-size="22" letter-spacing="1.6" fill="#8e9197">1300</text><line x1="2431.2" y1="313" x2="2431.2" y2="322" stroke="#c9cacf" stroke-width="2"/><line x1="2442.8" y1="313" x2="2442.8" y2="322" stroke="#c9cacf" stroke-width="2"/><line x1="2454.5" y1="313" x2="2454.5" y2="322" stroke="#c9cacf" stroke-width="2"/><line x1="2466.1" y1="313" x2="2466.1" y2="322" stroke="#c9cacf" stroke-width="2"/><line x1="2477.7" y1="307" x2="2477.7" y2="322" stroke="#c9cacf" stroke-width="2"/><line x1="2489.3" y1="313" x2="2489.3" y2="322" stroke="#c9cacf" stroke-width="2"/><line x1="2500.9" y1="313" x2="2500.9" y2="322" stroke="#c9cacf" stroke-width="2"/><line x1="2512.6" y1="313" x2="2512.6" y2="322" stroke="#c9cacf" stroke-width="2"/><line x1="2524.2" y1="313" x2="2524.2" y2="322" stroke="#c9cacf" stroke-width="2"/><line x1="2535.8" y1="275" x2="2535.8" y2="322" stroke="#c9cacf" stroke-width="2"/><text x="2545.8" y="303" font-family="Liberation Sans" font-size="22" letter-spacing="1.6" fill="#8e9197">1400</text><line x1="2547.4" y1="313" x2="2547.4" y2="322" stroke="#c9cacf" stroke-width="2"/><line x1="2559.0" y1="313" x2="2559.0" y2="322" stroke="#c9cacf" stroke-width="2"/><line x1="2570.7" y1="313" x2="2570.7" y2="322" stroke="#c9cacf" stroke-width="2"/><line x1="2582.3" y1="313" x2="2582.3" y2="322" stroke="#c9cacf" stroke-width="2"/><line x1="2593.9" y1="307" x2="2593.9" y2="322" stroke="#c9cacf" stroke-width="2"/><line x1="2605.5" y1="313" x2="2605.5" y2="322" stroke="#c9cacf" stroke-width="2"/><line x1="2617.1" y1="313" x2="2617.1" y2="322" stroke="#c9cacf" stroke-width="2"/><line x1="2628.8" y1="313" x2="2628.8" y2="322" stroke="#c9cacf" stroke-width="2"/><line x1="2640.4" y1="313" x2="2640.4" y2="322" stroke="#c9cacf" stroke-width="2"/><line x1="2652.0" y1="275" x2="2652.0" y2="322" stroke="#c9cacf" stroke-width="2"/><text x="2662.0" y="303" font-family="Liberation Sans" font-size="22" letter-spacing="1.6" fill="#8e9197">1500</text><line x1="2663.6" y1="313" x2="2663.6" y2="322" stroke="#c9cacf" stroke-width="2"/><line x1="2675.2" y1="313" x2="2675.2" y2="322" stroke="#c9cacf" stroke-width="2"/><line x1="2686.9" y1="313" x2="2686.9" y2="322" stroke="#c9cacf" stroke-width="2"/><line x1="2698.5" y1="313" x2="2698.5" y2="322" stroke="#c9cacf" stroke-width="2"/><line x1="2710.1" y1="307" x2="2710.1" y2="322" stroke="#c9cacf" stroke-width="2"/><line x1="2721.7" y1="313" x2="2721.7" y2="322" stroke="#c9cacf" stroke-width="2"/><line x1="2733.3" y1="313" x2="2733.3" y2="322" stroke="#c9cacf" stroke-width="2"/><line x1="2745.0" y1="313" x2="2745.0" y2="322" stroke="#c9cacf" stroke-width="2"/><line x1="2756.6" y1="313" x2="2756.6" y2="322" stroke="#c9cacf" stroke-width="2"/><line x1="2768.2" y1="275" x2="2768.2" y2="322" stroke="#c9cacf" stroke-width="2"/><text x="2778.2" y="303" font-family="Liberation Sans" font-size="22" letter-spacing="1.6" fill="#8e9197">1600</text><line x1="2779.8" y1="313" x2="2779.8" y2="322" stroke="#c9cacf" stroke-width="2"/><line x1="2791.4" y1="313" x2="2791.4" y2="322" stroke="#c9cacf" stroke-width="2"/><line x1="2803.1" y1="313" x2="2803.1" y2="322" stroke="#c9cacf" stroke-width="2"/><line x1="2814.7" y1="313" x2="2814.7" y2="322" stroke="#c9cacf" stroke-width="2"/><line x1="2826.3" y1="307" x2="2826.3" y2="322" stroke="#c9cacf" stroke-width="2"/><line x1="2837.9" y1="313" x2="2837.9" y2="322" stroke="#c9cacf" stroke-width="2"/><line x1="2849.5" y1="313" x2="2849.5" y2="322" stroke="#c9cacf" stroke-width="2"/><line x1="2861.2" y1="313" x2="2861.2" y2="322" stroke="#c9cacf" stroke-width="2"/><line x1="2872.8" y1="313" x2="2872.8" y2="322" stroke="#c9cacf" stroke-width="2"/><line x1="2884.4" y1="275" x2="2884.4" y2="322" stroke="#c9cacf" stroke-width="2"/><text x="2894.4" y="303" font-family="Liberation Sans" font-size="22" letter-spacing="1.6" fill="#8e9197">1700</text><line x1="2896.0" y1="313" x2="2896.0" y2="322" stroke="#c9cacf" stroke-width="2"/><line x1="2907.6" y1="313" x2="2907.6" y2="322" stroke="#c9cacf" stroke-width="2"/><line x1="2919.3" y1="313" x2="2919.3" y2="322" stroke="#c9cacf" stroke-width="2"/><line x1="2930.9" y1="313" x2="2930.9" y2="322" stroke="#c9cacf" stroke-width="2"/><line x1="2942.5" y1="307" x2="2942.5" y2="322" stroke="#c9cacf" stroke-width="2"/><line x1="2954.1" y1="313" x2="2954.1" y2="322" stroke="#c9cacf" stroke-width="2"/><line x1="2965.7" y1="313" x2="2965.7" y2="322" stroke="#c9cacf" stroke-width="2"/><line x1="2977.4" y1="313" x2="2977.4" y2="322" stroke="#c9cacf" stroke-width="2"/><line x1="2989.0" y1="313" x2="2989.0" y2="322" stroke="#c9cacf" stroke-width="2"/><line x1="3000.6" y1="275" x2="3000.6" y2="322" stroke="#c9cacf" stroke-width="2"/><text x="3010.6" y="303" font-family="Liberation Sans" font-size="22" letter-spacing="1.6" fill="#8e9197">1800</text><line x1="3012.2" y1="313" x2="3012.2" y2="322" stroke="#c9cacf" stroke-width="2"/><line x1="3023.8" y1="313" x2="3023.8" y2="322" stroke="#c9cacf" stroke-width="2"/><line x1="3035.5" y1="313" x2="3035.5" y2="322" stroke="#c9cacf" stroke-width="2"/><line x1="3047.1" y1="313" x2="3047.1" y2="322" stroke="#c9cacf" stroke-width="2"/><line x1="3058.7" y1="307" x2="3058.7" y2="322" stroke="#c9cacf" stroke-width="2"/><line x1="3070.3" y1="313" x2="3070.3" y2="322" stroke="#c9cacf" stroke-width="2"/><line x1="3081.9" y1="313" x2="3081.9" y2="322" stroke="#c9cacf" stroke-width="2"/><line x1="3093.6" y1="313" x2="3093.6" y2="322" stroke="#c9cacf" stroke-width="2"/><line x1="3105.2" y1="313" x2="3105.2" y2="322" stroke="#c9cacf" stroke-width="2"/><line x1="3116.8" y1="275" x2="3116.8" y2="322" stroke="#c9cacf" stroke-width="2"/><text x="3126.8" y="303" font-family="Liberation Sans" font-size="22" letter-spacing="1.6" fill="#8e9197">1900</text><line x1="828" y1="508.0" x2="874" y2="508.0" stroke="#c9cacf" stroke-width="2"/><text transform="translate(856 518.0) rotate(-90)" font-family="Liberation Sans" font-size="22" letter-spacing="1.6" fill="#8e9197" text-anchor="end">0</text><line x1="865" y1="519.6" x2="874" y2="519.6" stroke="#c9cacf" stroke-width="2"/><line x1="865" y1="531.2" x2="874" y2="531.2" stroke="#c9cacf" stroke-width="2"/><line x1="865" y1="542.9" x2="874" y2="542.9" stroke="#c9cacf" stroke-width="2"/><line x1="865" y1="554.5" x2="874" y2="554.5" stroke="#c9cacf" stroke-width="2"/><line x1="859" y1="566.1" x2="874" y2="566.1" stroke="#c9cacf" stroke-width="2"/><line x1="865" y1="577.7" x2="874" y2="577.7" stroke="#c9cacf" stroke-width="2"/><line x1="865" y1="589.3" x2="874" y2="589.3" stroke="#c9cacf" stroke-width="2"/><line x1="865" y1="601.0" x2="874" y2="601.0" stroke="#c9cacf" stroke-width="2"/><line x1="865" y1="612.6" x2="874" y2="612.6" stroke="#c9cacf" stroke-width="2"/><line x1="828" y1="624.2" x2="874" y2="624.2" stroke="#c9cacf" stroke-width="2"/><text transform="translate(856 634.2) rotate(-90)" font-family="Liberation Sans" font-size="22" letter-spacing="1.6" fill="#8e9197" text-anchor="end">100</text><line x1="865" y1="635.8" x2="874" y2="635.8" stroke="#c9cacf" stroke-width="2"/><line x1="865" y1="647.4" x2="874" y2="647.4" stroke="#c9cacf" stroke-width="2"/><line x1="865" y1="659.1" x2="874" y2="659.1" stroke="#c9cacf" stroke-width="2"/><line x1="865" y1="670.7" x2="874" y2="670.7" stroke="#c9cacf" stroke-width="2"/><line x1="859" y1="682.3" x2="874" y2="682.3" stroke="#c9cacf" stroke-width="2"/><line x1="865" y1="693.9" x2="874" y2="693.9" stroke="#c9cacf" stroke-width="2"/><line x1="865" y1="705.5" x2="874" y2="705.5" stroke="#c9cacf" stroke-width="2"/><line x1="865" y1="717.2" x2="874" y2="717.2" stroke="#c9cacf" stroke-width="2"/><line x1="865" y1="728.8" x2="874" y2="728.8" stroke="#c9cacf" stroke-width="2"/><line x1="828" y1="740.4" x2="874" y2="740.4" stroke="#c9cacf" stroke-width="2"/><text transform="translate(856 750.4) rotate(-90)" font-family="Liberation Sans" font-size="22" letter-spacing="1.6" fill="#8e9197" text-anchor="end">200</text><line x1="865" y1="752.0" x2="874" y2="752.0" stroke="#c9cacf" stroke-width="2"/><line x1="865" y1="763.6" x2="874" y2="763.6" stroke="#c9cacf" stroke-width="2"/><line x1="865" y1="775.3" x2="874" y2="775.3" stroke="#c9cacf" stroke-width="2"/><line x1="865" y1="786.9" x2="874" y2="786.9" stroke="#c9cacf" stroke-width="2"/><line x1="859" y1="798.5" x2="874" y2="798.5" stroke="#c9cacf" stroke-width="2"/><line x1="865" y1="810.1" x2="874" y2="810.1" stroke="#c9cacf" stroke-width="2"/><line x1="865" y1="821.7" x2="874" y2="821.7" stroke="#c9cacf" stroke-width="2"/><line x1="865" y1="833.4" x2="874" y2="833.4" stroke="#c9cacf" stroke-width="2"/><line x1="865" y1="845.0" x2="874" y2="845.0" stroke="#c9cacf" stroke-width="2"/><line x1="828" y1="856.6" x2="874" y2="856.6" stroke="#c9cacf" stroke-width="2"/><text transform="translate(856 866.6) rotate(-90)" font-family="Liberation Sans" font-size="22" letter-spacing="1.6" fill="#8e9197" text-anchor="end">300</text><line x1="865" y1="868.2" x2="874" y2="868.2" stroke="#c9cacf" stroke-width="2"/><line x1="865" y1="879.8" x2="874" y2="879.8" stroke="#c9cacf" stroke-width="2"/><line x1="865" y1="891.5" x2="874" y2="891.5" stroke="#c9cacf" stroke-width="2"/><line x1="865" y1="903.1" x2="874" y2="903.1" stroke="#c9cacf" stroke-width="2"/><line x1="859" y1="914.7" x2="874" y2="914.7" stroke="#c9cacf" stroke-width="2"/><line x1="865" y1="926.3" x2="874" y2="926.3" stroke="#c9cacf" stroke-width="2"/><line x1="865" y1="937.9" x2="874" y2="937.9" stroke="#c9cacf" stroke-width="2"/><line x1="865" y1="949.6" x2="874" y2="949.6" stroke="#c9cacf" stroke-width="2"/><line x1="865" y1="961.2" x2="874" y2="961.2" stroke="#c9cacf" stroke-width="2"/><line x1="828" y1="972.8" x2="874" y2="972.8" stroke="#c9cacf" stroke-width="2"/><text transform="translate(856 982.8) rotate(-90)" font-family="Liberation Sans" font-size="22" letter-spacing="1.6" fill="#8e9197" text-anchor="end">400</text><line x1="865" y1="984.4" x2="874" y2="984.4" stroke="#c9cacf" stroke-width="2"/><line x1="865" y1="996.0" x2="874" y2="996.0" stroke="#c9cacf" stroke-width="2"/><line x1="865" y1="1007.7" x2="874" y2="1007.7" stroke="#c9cacf" stroke-width="2"/><line x1="865" y1="1019.3" x2="874" y2="1019.3" stroke="#c9cacf" stroke-width="2"/><line x1="859" y1="1030.9" x2="874" y2="1030.9" stroke="#c9cacf" stroke-width="2"/><line x1="865" y1="1042.5" x2="874" y2="1042.5" stroke="#c9cacf" stroke-width="2"/><line x1="865" y1="1054.1" x2="874" y2="1054.1" stroke="#c9cacf" stroke-width="2"/><line x1="865" y1="1065.8" x2="874" y2="1065.8" stroke="#c9cacf" stroke-width="2"/><line x1="865" y1="1077.4" x2="874" y2="1077.4" stroke="#c9cacf" stroke-width="2"/><line x1="828" y1="1089.0" x2="874" y2="1089.0" stroke="#c9cacf" stroke-width="2"/><text transform="translate(856 1099.0) rotate(-90)" font-family="Liberation Sans" font-size="22" letter-spacing="1.6" fill="#8e9197" text-anchor="end">500</text><line x1="865" y1="1100.6" x2="874" y2="1100.6" stroke="#c9cacf" stroke-width="2"/><line x1="865" y1="1112.2" x2="874" y2="1112.2" stroke="#c9cacf" stroke-width="2"/><line x1="865" y1="1123.9" x2="874" y2="1123.9" stroke="#c9cacf" stroke-width="2"/><line x1="865" y1="1135.5" x2="874" y2="1135.5" stroke="#c9cacf" stroke-width="2"/><line x1="859" y1="1147.1" x2="874" y2="1147.1" stroke="#c9cacf" stroke-width="2"/><line x1="865" y1="1158.7" x2="874" y2="1158.7" stroke="#c9cacf" stroke-width="2"/><line x1="865" y1="1170.3" x2="874" y2="1170.3" stroke="#c9cacf" stroke-width="2"/><line x1="865" y1="1182.0" x2="874" y2="1182.0" stroke="#c9cacf" stroke-width="2"/><line x1="865" y1="1193.6" x2="874" y2="1193.6" stroke="#c9cacf" stroke-width="2"/><line x1="828" y1="1205.2" x2="874" y2="1205.2" stroke="#c9cacf" stroke-width="2"/><text transform="translate(856 1215.2) rotate(-90)" font-family="Liberation Sans" font-size="22" letter-spacing="1.6" fill="#8e9197" text-anchor="end">600</text><line x1="865" y1="1216.8" x2="874" y2="1216.8" stroke="#c9cacf" stroke-width="2"/><line x1="865" y1="1228.4" x2="874" y2="1228.4" stroke="#c9cacf" stroke-width="2"/><line x1="865" y1="1240.1" x2="874" y2="1240.1" stroke="#c9cacf" stroke-width="2"/><line x1="865" y1="1251.7" x2="874" y2="1251.7" stroke="#c9cacf" stroke-width="2"/><line x1="859" y1="1263.3" x2="874" y2="1263.3" stroke="#c9cacf" stroke-width="2"/><line x1="865" y1="1274.9" x2="874" y2="1274.9" stroke="#c9cacf" stroke-width="2"/><line x1="865" y1="1286.5" x2="874" y2="1286.5" stroke="#c9cacf" stroke-width="2"/><line x1="865" y1="1298.2" x2="874" y2="1298.2" stroke="#c9cacf" stroke-width="2"/><line x1="865" y1="1309.8" x2="874" y2="1309.8" stroke="#c9cacf" stroke-width="2"/><line x1="828" y1="1321.4" x2="874" y2="1321.4" stroke="#c9cacf" stroke-width="2"/><text transform="translate(856 1331.4) rotate(-90)" font-family="Liberation Sans" font-size="22" letter-spacing="1.6" fill="#8e9197" text-anchor="end">700</text><line x1="865" y1="1333.0" x2="874" y2="1333.0" stroke="#c9cacf" stroke-width="2"/><line x1="865" y1="1344.6" x2="874" y2="1344.6" stroke="#c9cacf" stroke-width="2"/><line x1="865" y1="1356.3" x2="874" y2="1356.3" stroke="#c9cacf" stroke-width="2"/><line x1="865" y1="1367.9" x2="874" y2="1367.9" stroke="#c9cacf" stroke-width="2"/><line x1="859" y1="1379.5" x2="874" y2="1379.5" stroke="#c9cacf" stroke-width="2"/><line x1="865" y1="1391.1" x2="874" y2="1391.1" stroke="#c9cacf" stroke-width="2"/><line x1="865" y1="1402.7" x2="874" y2="1402.7" stroke="#c9cacf" stroke-width="2"/><line x1="865" y1="1414.4" x2="874" y2="1414.4" stroke="#c9cacf" stroke-width="2"/><line x1="865" y1="1426.0" x2="874" y2="1426.0" stroke="#c9cacf" stroke-width="2"/><line x1="828" y1="1437.6" x2="874" y2="1437.6" stroke="#c9cacf" stroke-width="2"/><text transform="translate(856 1447.6) rotate(-90)" font-family="Liberation Sans" font-size="22" letter-spacing="1.6" fill="#8e9197" text-anchor="end">800</text><line x1="865" y1="1449.2" x2="874" y2="1449.2" stroke="#c9cacf" stroke-width="2"/><line x1="865" y1="1460.8" x2="874" y2="1460.8" stroke="#c9cacf" stroke-width="2"/><line x1="865" y1="1472.5" x2="874" y2="1472.5" stroke="#c9cacf" stroke-width="2"/><line x1="865" y1="1484.1" x2="874" y2="1484.1" stroke="#c9cacf" stroke-width="2"/><line x1="859" y1="1495.7" x2="874" y2="1495.7" stroke="#c9cacf" stroke-width="2"/><line x1="865" y1="1507.3" x2="874" y2="1507.3" stroke="#c9cacf" stroke-width="2"/><line x1="865" y1="1518.9" x2="874" y2="1518.9" stroke="#c9cacf" stroke-width="2"/><line x1="865" y1="1530.6" x2="874" y2="1530.6" stroke="#c9cacf" stroke-width="2"/><line x1="865" y1="1542.2" x2="874" y2="1542.2" stroke="#c9cacf" stroke-width="2"/><line x1="828" y1="1553.8" x2="874" y2="1553.8" stroke="#c9cacf" stroke-width="2"/><text transform="translate(856 1563.8) rotate(-90)" font-family="Liberation Sans" font-size="22" letter-spacing="1.6" fill="#8e9197" text-anchor="end">900</text><line x1="865" y1="1565.4" x2="874" y2="1565.4" stroke="#c9cacf" stroke-width="2"/><line x1="865" y1="1577.0" x2="874" y2="1577.0" stroke="#c9cacf" stroke-width="2"/><line x1="865" y1="1588.7" x2="874" y2="1588.7" stroke="#c9cacf" stroke-width="2"/><line x1="865" y1="1600.3" x2="874" y2="1600.3" stroke="#c9cacf" stroke-width="2"/><line x1="859" y1="1611.9" x2="874" y2="1611.9" stroke="#c9cacf" stroke-width="2"/><line x1="865" y1="1623.5" x2="874" y2="1623.5" stroke="#c9cacf" stroke-width="2"/><line x1="865" y1="1635.1" x2="874" y2="1635.1" stroke="#c9cacf" stroke-width="2"/><line x1="865" y1="1646.8" x2="874" y2="1646.8" stroke="#c9cacf" stroke-width="2"/><line x1="865" y1="1658.4" x2="874" y2="1658.4" stroke="#c9cacf" stroke-width="2"/><line x1="828" y1="1670.0" x2="874" y2="1670.0" stroke="#c9cacf" stroke-width="2"/><text transform="translate(856 1680.0) rotate(-90)" font-family="Liberation Sans" font-size="22" letter-spacing="1.6" fill="#8e9197" text-anchor="end">1000</text><line x1="865" y1="1681.6" x2="874" y2="1681.6" stroke="#c9cacf" stroke-width="2"/><line x1="865" y1="1693.2" x2="874" y2="1693.2" stroke="#c9cacf" stroke-width="2"/><line x1="865" y1="1704.9" x2="874" y2="1704.9" stroke="#c9cacf" stroke-width="2"/><line x1="865" y1="1716.5" x2="874" y2="1716.5" stroke="#c9cacf" stroke-width="2"/><line x1="859" y1="1728.1" x2="874" y2="1728.1" stroke="#c9cacf" stroke-width="2"/><line x1="865" y1="1739.7" x2="874" y2="1739.7" stroke="#c9cacf" stroke-width="2"/><line x1="865" y1="1751.3" x2="874" y2="1751.3" stroke="#c9cacf" stroke-width="2"/><line x1="865" y1="1763.0" x2="874" y2="1763.0" stroke="#c9cacf" stroke-width="2"/><line x1="865" y1="1774.6" x2="874" y2="1774.6" stroke="#c9cacf" stroke-width="2"/><line x1="828" y1="1786.2" x2="874" y2="1786.2" stroke="#c9cacf" stroke-width="2"/><text transform="translate(856 1796.2) rotate(-90)" font-family="Liberation Sans" font-size="22" letter-spacing="1.6" fill="#8e9197" text-anchor="end">1100</text><line x1="865" y1="1797.8" x2="874" y2="1797.8" stroke="#c9cacf" stroke-width="2"/><line x1="865" y1="1809.4" x2="874" y2="1809.4" stroke="#c9cacf" stroke-width="2"/></svg>
<div class="a" style="left:909px;top:508px;width:2231px;height:1255px;background:#161616;box-shadow:0 2px 8px rgba(0,0,0,.12)"></div>
<svg class="a" style="left:909px;top:508px" width="2231" height="1255"><filter id="nz" x="0" y="0" width="100%" height="100%"><feTurbulence type="fractalNoise" baseFrequency="0.9" numOctaves="2" seed="3"/><feColorMatrix type="matrix" values="0 0 0 0 1  0 0 0 0 1  0 0 0 0 1  0 0 0 -2.2 1.45"/></filter><rect width="2231" height="1255" filter="url(#nz)" opacity=".10"/></svg>
<!-- toolbar -->
<div class="a" style="left:1380px;top:340px;width:1750px;height:75px;background:#fff;border-radius:22px;box-shadow:0 4px 14px rgba(0,0,0,.08)"></div>
<div class="a" style="left:1389px;top:348px;width:273px;height:60px;border:2px solid #e3e4e8;border-radius:12px"></div>
<div class="a pt" style="left:1404px;top:362px;font-size:28px;color:#0e1318">Canva Sans</div>
<div class="a" style="left:1672px;top:348px;width:197px;height:60px;border:2px solid #e3e4e8;border-radius:12px"></div>
<div class="a" style="left:1695px;top:377px;width:16px;height:3px;background:#0e1318"></div>
<div class="a pt" style="left:1757px;top:362px;font-size:28px;color:#0e1318">52</div>
<svg class="a" style="left:1829px;top:367px" width="22" height="22" viewBox="0 0 22 22"><path d="M11 2v18M2 11h18" stroke="#0e1318" stroke-width="3"/></svg>
<svg class="a" style="left:1888px;top:352px" width="44" height="50" viewBox="0 0 44 50"><path d="M10 33L22 7l12 26M14.5 24h15" fill="none" stroke="#0e1318" stroke-width="3.2"/><defs><linearGradient id="rb" x1="0" x2="1"><stop offset="0" stop-color="#f45a2c"/><stop offset=".3" stop-color="#f9d12a"/><stop offset=".55" stop-color="#4fd36b"/><stop offset=".8" stop-color="#24a8f0"/><stop offset="1" stop-color="#2f6ff0"/></linearGradient></defs><rect x="2" y="38" width="40" height="8" rx="4" fill="url(#rb)"/></svg>
<div class="a" style="left:1948px;top:348px;width:59px;height:60px;border-radius:12px;background:#efe8fd"></div>
<div class="a pt" style="left:1965px;top:361px;font-size:32px;font-weight:bold;color:#6a3fc7">B</div>
<svg class="a" style="left:2030px;top:360px" width="34" height="36" viewBox="0 0 34 36"><path d="M12 4h17M5 32h17M21 4l-8 28" fill="none" stroke="#0e1318" stroke-width="3.2"/></svg>
<svg class="a" style="left:2100px;top:356px" width="32" height="44" viewBox="0 0 32 44"><path d="M7 5v16a9 9 0 0 0 18 0V5" fill="none" stroke="#0e1318" stroke-width="3"/><path d="M5 39h22" stroke="#0e1318" stroke-width="3"/></svg>
<svg class="a" style="left:2168px;top:356px" width="34" height="44" viewBox="0 0 34 44"><path d="M25 11c-2-4-14-5-15 2-1 8 15 6 15 14 0 7-13 7-16 2" fill="none" stroke="#0e1318" stroke-width="3"/><path d="M4 22h26" stroke="#0e1318" stroke-width="3"/></svg>
<div class="a pt" style="left:2233px;top:362px;font-size:29px;color:#0e1318">aA</div>
<svg class="a" style="left:2303px;top:358px" width="40" height="40" viewBox="0 0 40 40"><path d="M4 8h32M4 16h32M4 24h32M4 32h32" stroke="#0e1318" stroke-width="3"/></svg>
<svg class="a" style="left:2372px;top:358px" width="40" height="40" viewBox="0 0 40 40"><circle cx="6" cy="7" r="3.5" fill="#0e1318"/><circle cx="6" cy="20" r="3.5" fill="#0e1318"/><circle cx="6" cy="33" r="3.5" fill="#0e1318"/><path d="M15 7h22M15 20h22M15 33h22" stroke="#0e1318" stroke-width="3"/></svg>
<svg class="a" style="left:2440px;top:356px" width="42" height="44" viewBox="0 0 42 44"><path d="M3 10h18M3 22h18M3 34h18" stroke="#0e1318" stroke-width="3"/><path d="M32 5v34M26 11l6-6 6 6M26 33l6 6 6-6" fill="none" stroke="#0e1318" stroke-width="3"/></svg>
<div class="a" style="left:2505px;top:363px;width:2px;height:30px;background:#e3e4e8"></div>
<svg class="a" style="left:2534px;top:359px" width="40" height="40" viewBox="0 0 40 40"><g fill="#0e1318"><rect x="0" y="0" width="8" height="8"/><rect x="16" y="0" width="8" height="8" opacity=".35"/><rect x="8" y="8" width="8" height="8" opacity=".8"/><rect x="24" y="8" width="8" height="8" opacity=".3"/><rect x="0" y="16" width="8" height="8"/><rect x="16" y="16" width="8" height="8" opacity=".55"/><rect x="32" y="16" width="8" height="8" opacity=".15"/><rect x="8" y="24" width="8" height="8" opacity=".7"/><rect x="24" y="24" width="8" height="8" opacity=".25"/><rect x="0" y="32" width="8" height="8"/><rect x="16" y="32" width="8" height="8" opacity=".45"/><rect x="32" y="32" width="8" height="8" opacity=".12"/></g></svg>
<div class="a" style="left:2598px;top:363px;width:2px;height:30px;background:#e3e4e8"></div>
<div class="a pt md" style="left:2631px;top:362px;font-size:28px;font-weight:bold;color:#0e1318;letter-spacing:0.55px">Effects</div>
<div class="a" style="left:2751px;top:363px;width:2px;height:30px;background:#e3e4e8"></div>
<svg class="a" style="left:2778px;top:356px" width="46" height="46" viewBox="0 0 46 46"><circle cx="14" cy="30" r="11" fill="none" stroke="#c6c7cb" stroke-width="2.4"/><circle cx="19" cy="25" r="12" fill="#fff" stroke="#9a9ca1" stroke-width="2.4"/><circle cx="25" cy="18" r="13" fill="#fff" stroke="#0e1318" stroke-width="3"/></svg>
<div class="a pt md" style="left:2829px;top:362px;font-size:28px;font-weight:bold;color:#0e1318;letter-spacing:0.72px">Animate</div>
<div class="a" style="left:2968px;top:363px;width:2px;height:30px;background:#e3e4e8"></div>
<div class="a pt md" style="left:3000px;top:362px;font-size:28px;font-weight:bold;color:#0e1318;letter-spacing:0.6px">Position</div>
<!-- page actions -->
<svg class="a" style="left:2956px;top:450px" width="38" height="42" viewBox="0 0 38 42"><rect x="5" y="17" width="27" height="22" rx="4" fill="none" stroke="#6b6e75" stroke-width="2.8"/><path d="M11 17v-6a8 8 0 0 1 16-2" fill="none" stroke="#6b6e75" stroke-width="2.8"/><path d="M18.5 25v7" stroke="#6b6e75" stroke-width="3"/></svg>
<svg class="a" style="left:3025px;top:451px" width="40" height="40" viewBox="0 0 40 40"><path d="M9 29H7a4 4 0 0 1-4-4V7a4 4 0 0 1 4-4h18a4 4 0 0 1 4 4v2" fill="none" stroke="#6b6e75" stroke-width="2.8"/><rect x="11" y="11" width="26" height="26" rx="4" fill="none" stroke="#6b6e75" stroke-width="2.8"/><path d="M24 17v14M17 24h14" stroke="#6b6e75" stroke-width="2.8"/></svg>
<svg class="a" style="left:3092px;top:448px" width="42" height="44" viewBox="0 0 42 44"><path d="M22 12H9a4 4 0 0 0-4 4v20a4 4 0 0 0 4 4h20a4 4 0 0 0 4-4v-4" fill="none" stroke="#6b6e75" stroke-width="2.8"/><path d="M30 3v20M20 13h20" stroke="#6b6e75" stroke-width="2.8"/></svg>
<!-- floating mini menu -->
<div class="a" style="left:1898px;top:690px;width:313px;height:69px;border-radius:35px;background:#fff"></div>
<svg class="a" style="left:1912px;top:704px" width="42" height="42" viewBox="0 0 42 42"><defs><linearGradient id="pg" x1="0" y1="1" x2="1" y2="0"><stop offset="0" stop-color="#8b7ff0"/><stop offset="1" stop-color="#6f8fe6"/></linearGradient></defs><path d="M33 5a3.5 3.5 0 0 1 5 5L15 33l-8 4 3-8z" fill="none" stroke="url(#pg)" stroke-width="2.6" stroke-linejoin="round"/><path d="M10 29l4 4M29 9l5 5" stroke="url(#pg)" stroke-width="2.4"/><path d="M12 2l1.6 4.2 4.2 1.6-4.2 1.6L12 13.6l-1.6-4.2-4.2-1.6 4.2-1.6z" fill="#23a3c9"/><circle cx="5" cy="15" r="1.8" fill="#7fc6dc"/></svg>
<svg class="a" style="left:1973px;top:709px" width="42" height="32" viewBox="0 0 42 32"><rect x="2.5" y="3" width="25" height="15" rx="7.5" fill="none" stroke="#161616" stroke-width="2.7"/><path d="M21 13.5h-2" stroke="#fff" stroke-width="5"/><rect x="14.5" y="14" width="25" height="15" rx="7.5" fill="none" stroke="#161616" stroke-width="2.7"/><path d="M22 3.2a7.5 7.5 0 0 1 4.5 6" fill="none" stroke="#fff" stroke-width="0"/></svg>
<svg class="a" style="left:2034px;top:705px" width="44" height="42" viewBox="0 0 44 42"><path d="M26 4.5C24.5 4.2 22.5 4 21 4 11.6 4 4 10.4 4 18.2c0 6 4.3 11 10.6 13l.6 6.3 7.4-5.3c9-.5 16-6.6 16-14.1 0-.8 0-1.6-.2-2.4" fill="none" stroke="#161616" stroke-width="2.6" stroke-linecap="round" stroke-linejoin="round"/><path d="M35 3v14M28 10h14" stroke="#161616" stroke-width="2.6"/></svg>
<svg class="a" style="left:2099px;top:700px" width="36" height="46" viewBox="0 0 36 46"><rect x="4" y="18" width="28" height="24" rx="3.5" fill="none" stroke="#161616" stroke-width="2.7"/><path d="M6 11a11 11 0 0 1 21 1v6" fill="none" stroke="#161616" stroke-width="2.7" stroke-linecap="round"/><circle cx="18" cy="27" r="2.6" fill="#161616"/><path d="M18 28v7" stroke="#161616" stroke-width="2.6"/></svg>
<svg class="a" style="left:2157px;top:715px" width="40" height="20" viewBox="0 0 40 20"><circle cx="6" cy="10" r="3.4" fill="#161616"/><circle cx="20" cy="10" r="3.4" fill="#161616"/><circle cx="34" cy="10" r="3.4" fill="#161616"/></svg>
<!-- text -->
<div class="a" style="left:2238px;top:910px;width:178px;height:113px;background:#0c4fbf"></div>
<div class="a ctext" style="left:1245px;top:801px;width:1563px">
<div class="j"><span>In</span><span>a</span><span>whimsical</span><span>town</span><span>where</span><span>the</span><span>sun</span><span>set</span></div>
<div class="j"><span>in</span><span>shades</span><span>of</span><span>lavender,</span><span>the</span><span>townsfolk</span></div>
<div class="j"><span>gathered</span><span>every</span><span>Thursday</span><span>evening</span><span>to</span></div>
<div class="j"><span>share</span><span>stories</span><span>by</span><span>the</span><span>riverbank.</span><span>Children</span></div>
<div class="j"><span>chased</span><span>fireflies</span><span>while</span><span>the</span><span>aroma</span><span>of</span></div>
<div>freshly baked pies filled the air.</div>
</div>
<svg class="a" style="left:2268px;top:978px" width="16" height="34" viewBox="0 0 16 34"><path d="M2 2h12M8 2v30M2 32h12" stroke="#333" stroke-width="3"/><path d="M2 2h12M8 2v30M2 32h12" stroke="#f4f8ff" stroke-width="1.5"/></svg>
<!-- selection box -->
<div class="a" style="left:1242px;top:803px;width:1564px;height:666px;border:4px solid #7f53dc"></div>
<div class="a hd" style="left:1232px;top:791px"></div>
<div class="a hd" style="left:2792px;top:791px"></div>
<div class="a hd" style="left:1232px;top:1455px"></div>
<div class="a hd" style="left:2792px;top:1455px"></div>
<div class="a" style="left:1238px;top:1120px;width:12px;height:32px;border-radius:6px;background:#fff;box-shadow:0 0 2px rgba(0,0,0,.4)"></div>
<div class="a" style="left:2798px;top:1120px;width:12px;height:32px;border-radius:6px;background:#fff;box-shadow:0 0 2px rgba(0,0,0,.4)"></div>
<!-- rotate -->
<div class="a" style="left:2000px;top:1531px;width:48px;height:48px;border-radius:50%;background:#fff"></div>
<svg class="a" style="left:2009px;top:1540px" width="30" height="30" viewBox="0 0 30 30"><path d="M22.5 9.5A9 9 0 0 0 6.5 11M7.5 20.5a9 9 0 0 0 16-1.5" fill="none" stroke="#161616" stroke-width="2"/><path d="M23 4.5v6h-6M7 25.5v-6h6" fill="none" stroke="#161616" stroke-width="2"/></svg>
<!-- add page -->
<div class="a" style="left:909px;top:1810px;width:2231px;height:76px;border:2px solid #d9dade;border-radius:14px"></div>
<div class="a pt" style="left:909px;top:1832px;width:2231px;text-align:center;font-size:27px;color:#0e1318">+ Add page</div>
<!-- bottom bar -->
<div class="a" style="left:828px;top:1915px;width:2852px;height:2px;background:#dcdde1"></div>
<svg class="a" style="left:858px;top:1938px" width="40" height="36" viewBox="0 0 40 36"><path d="M3 4h22M3 12h16M3 20h10M3 28h5" stroke="#0e1318" stroke-width="2.8"/><path d="M30 10a3 3 0 0 1 5 3L21 29l-6 2 1-6z" fill="none" stroke="#0e1318" stroke-width="2.8" stroke-linejoin="round"/></svg>
<div class="a pt" style="left:907px;top:1939px;font-size:29px;color:#0e1318;letter-spacing:0.6px">Notes</div>
<div class="a pt" style="left:2684px;top:1940px;font-size:28px;color:#0e1318">Page <span style="-webkit-text-stroke:0.8px #0e1318;letter-spacing:-0.5px">1 / 1</span></div>
<div class="a" style="left:2837px;top:1951px;width:379px;height:7px;border-radius:4px;background:#dfe0e4"></div>
<div class="a" style="left:2837px;top:1951px;width:176px;height:7px;border-radius:4px;background:#bfc2c8"></div>
<div class="a" style="left:2995px;top:1937px;width:36px;height:36px;border-radius:50%;background:#fff;box-shadow:0 1px 4px rgba(0,0,0,.3)"></div>
<div class="a pt" style="left:3270px;top:1940px;font-size:28px;color:#0e1318">61%</div>
<svg class="a" style="left:3384px;top:1936px" width="40" height="38" viewBox="0 0 40 38"><rect x="3" y="3" width="34" height="20" rx="2" fill="none" stroke="#0e1318" stroke-width="2.8"/><rect x="3" y="28" width="9" height="7" fill="none" stroke="#0e1318" stroke-width="2.6"/><rect x="15.5" y="28" width="9" height="7" fill="none" stroke="#0e1318" stroke-width="2.6"/><rect x="28" y="28" width="9" height="7" fill="none" stroke="#0e1318" stroke-width="2.6"/></svg>
<svg class="a" style="left:3462px;top:1937px" width="36" height="36" viewBox="0 0 36 36"><rect x="3" y="3" width="12" height="12" rx="2" fill="none" stroke="#0e1318" stroke-width="2.8"/><rect x="21" y="3" width="12" height="12" rx="2" fill="none" stroke="#0e1318" stroke-width="2.8"/><rect x="3" y="21" width="12" height="12" rx="2" fill="none" stroke="#0e1318" stroke-width="2.8"/><rect x="21" y="21" width="12" height="12" rx="2" fill="none" stroke="#0e1318" stroke-width="2.8"/></svg>
<svg class="a" style="left:3537px;top:1935px" width="40" height="40" viewBox="0 0 40 40"><path d="M24 4h12v12M36 4L23 17M16 36H4V24M4 36l13-13" fill="none" stroke="#0e1318" stroke-width="2.8"/></svg>
<svg class="a" style="left:3612px;top:1934px" width="42" height="42" viewBox="0 0 42 42"><circle cx="21" cy="21" r="18" fill="none" stroke="#0e1318" stroke-width="2.8"/><path d="M15 16a6 6 0 1 1 8 6c-2 1-2 2-2 4" fill="none" stroke="#0e1318" stroke-width="2.8"/><circle cx="21" cy="31" r="2" fill="#0e1318"/></svg>

<!-- ===== Taskbar ===== -->
<div class="a" style="left:0;top:1993px;width:3680px;height:77px;background:#0f0f10;border-radius:0 0 32px 32px"></div>
<div class="a" style="left:0;top:2040px;width:32px;height:30px;background:radial-gradient(circle at 100% 0,transparent 31px,#fff 32px)"></div>
<div class="a" style="left:3648px;top:2040px;width:32px;height:30px;background:radial-gradient(circle at 0 0,transparent 31px,#fff 32px)"></div>
<svg class="a" style="left:30px;top:2016px" width="33" height="32" viewBox="0 0 33 32"><path d="M0 4.5l13-1.8V15H0zM15 2.4L33 0v15H15zM0 17h13v12.3L0 27.5zM15 17h18v15l-18-2.5z" fill="#fff"/></svg>
<!-- explorer -->
<div class="a" style="left:123px;top:2014px;width:42px;height:36px;border-radius:2px;background:#f3c94a"></div>
<div class="a" style="left:123px;top:2010px;width:18px;height:7px;border-radius:2px 2px 0 0;background:#e8b33a"></div>
<div class="a" style="left:131px;top:2032px;width:26px;height:18px;border:4px solid #3b8fd9;border-bottom:none;background:#f3c94a"></div>
<!-- chrome 1 -->
<div class="a chrome" style="left:215px;top:2009px"></div>
<div class="a" style="left:237px;top:2031px;width:27px;height:27px;border-radius:50%;background:#fbe6b8"></div>
<div class="a" style="left:243px;top:2037px;width:14px;height:14px;background:#e07a2a;border-radius:3px 8px 3px 3px"></div>
<!-- obs -->
<div class="a" style="left:310px;top:2010px;width:44px;height:44px;border-radius:50%;background:#1b1b1d;border:3px solid #d9d9d9"></div>
<svg class="a" style="left:313px;top:2013px" width="38" height="38" viewBox="0 0 38 38"><circle cx="19" cy="11" r="6" fill="none" stroke="#cfcfcf" stroke-width="2.5"/><circle cx="11" cy="24" r="6" fill="none" stroke="#cfcfcf" stroke-width="2.5"/><circle cx="27" cy="24" r="6" fill="none" stroke="#cfcfcf" stroke-width="2.5"/></svg>
<div class="a" style="left:334px;top:2034px;width:22px;height:22px;border-radius:50%;background:#f00"></div>
<!-- active chrome -->
<div class="a" style="left:380px;top:1993px;width:85px;height:77px;background:#3a3a3b"></div>
<div class="a chrome" style="left:403px;top:2009px"></div>
<div class="a" style="left:424px;top:2031px;width:28px;height:28px;border-radius:50%;background:#e3e7ea"></div>
<!-- red app -->
<div class="a" style="left:496px;top:2008px;width:46px;height:46px;border-radius:50%;background:#2b3240"></div>
<div class="a" style="left:503px;top:2015px;width:32px;height:32px;border-radius:50%;border:6px solid #f25555;background:#2b3240"></div>
<!-- underlines -->
<div class="a" style="left:106px;top:2066px;width:76px;height:4px;background:#7fb6ea"></div>
<div class="a" style="left:200px;top:2066px;width:76px;height:4px;background:#7fb6ea"></div>
<div class="a" style="left:293px;top:2066px;width:77px;height:4px;background:#7fb6ea"></div>
<div class="a" style="left:380px;top:2066px;width:85px;height:4px;background:#7fb6ea"></div>
<div class="a" style="left:481px;top:2066px;width:76px;height:4px;background:#7fb6ea"></div>
<!-- tray -->
<div class="a tb" style="left:2960px;top:2006px">U:<br>D:</div>
<div class="a tb" style="left:3037px;top:2006px;letter-spacing:-0.3px">0 kB/s<br>0 kB/s</div>
<svg class="a" style="left:3108px;top:2018px" width="30" height="24" viewBox="0 0 30 24"><path d="M4 18l11-11 11 11" fill="none" stroke="#fff" stroke-width="2.6"/></svg>
<svg class="a" style="left:3153px;top:2012px" width="28" height="40" viewBox="0 0 28 40"><rect x="8" y="2" width="12" height="24" rx="6" fill="#fff"/><path d="M4 18a10 10 0 0 0 20 0M14 28v8M8 37h12" fill="none" stroke="#fff" stroke-width="2.4"/></svg>
<div class="a" style="left:3199px;top:2016px;width:30px;height:30px;border-radius:50%;background:#3a4256"></div>
<div class="a" style="left:3213px;top:2018px;width:12px;height:12px;border-radius:0 10px 0 0;border-top:4px solid #ef4d5a;border-right:4px solid #ef4d5a"></div>
<div class="a" style="left:3246px;top:2016px;width:28px;height:30px;background:#0c0c0c;border:2px solid #2bc15a"></div>
<div class="a" style="left:3254px;top:2020px;width:12px;height:22px;background:linear-gradient(#f6c94a 0 45%,#9db2f0 45%)"></div>
<svg class="a" style="left:3290px;top:2014px" width="36" height="34" viewBox="0 0 36 34"><path d="M4 28a26 26 0 0 1 26-26M10 28a20 20 0 0 1 20-20M16 28a14 14 0 0 1 14-14M22 28a8 8 0 0 1 8-8" fill="none" stroke="#fff" stroke-width="2.4"/><circle cx="29" cy="28" r="3" fill="#fff"/></svg>
<svg class="a" style="left:3334px;top:2013px" width="40" height="36" viewBox="0 0 40 36"><path d="M4 13h7l9-8v26l-9-8H4z" fill="none" stroke="#fff" stroke-width="2.4" stroke-linejoin="round"/><path d="M25 13a6 6 0 0 1 0 10M29 9a12 12 0 0 1 0 18M33 5a18 18 0 0 1 0 26" fill="none" stroke="#fff" stroke-width="2" opacity=".85"/></svg>
<div class="a tb" style="left:3385px;top:2019px;font-size:25px">ENG</div>
<div class="a tb" style="left:3452px;top:2001px;width:116px;text-align:center;line-height:33px;font-size:23px">10:29<br>04/12/2024</div>
<svg class="a" style="left:3597px;top:2012px" width="42" height="40" viewBox="0 0 42 40"><path d="M4 4h34v26H25l-4 6-4-6H4z" fill="#fff"/><path d="M11 12h20M11 18h20M11 24h13" stroke="#0f0f10" stroke-width="2.2"/></svg>

</body></html>
